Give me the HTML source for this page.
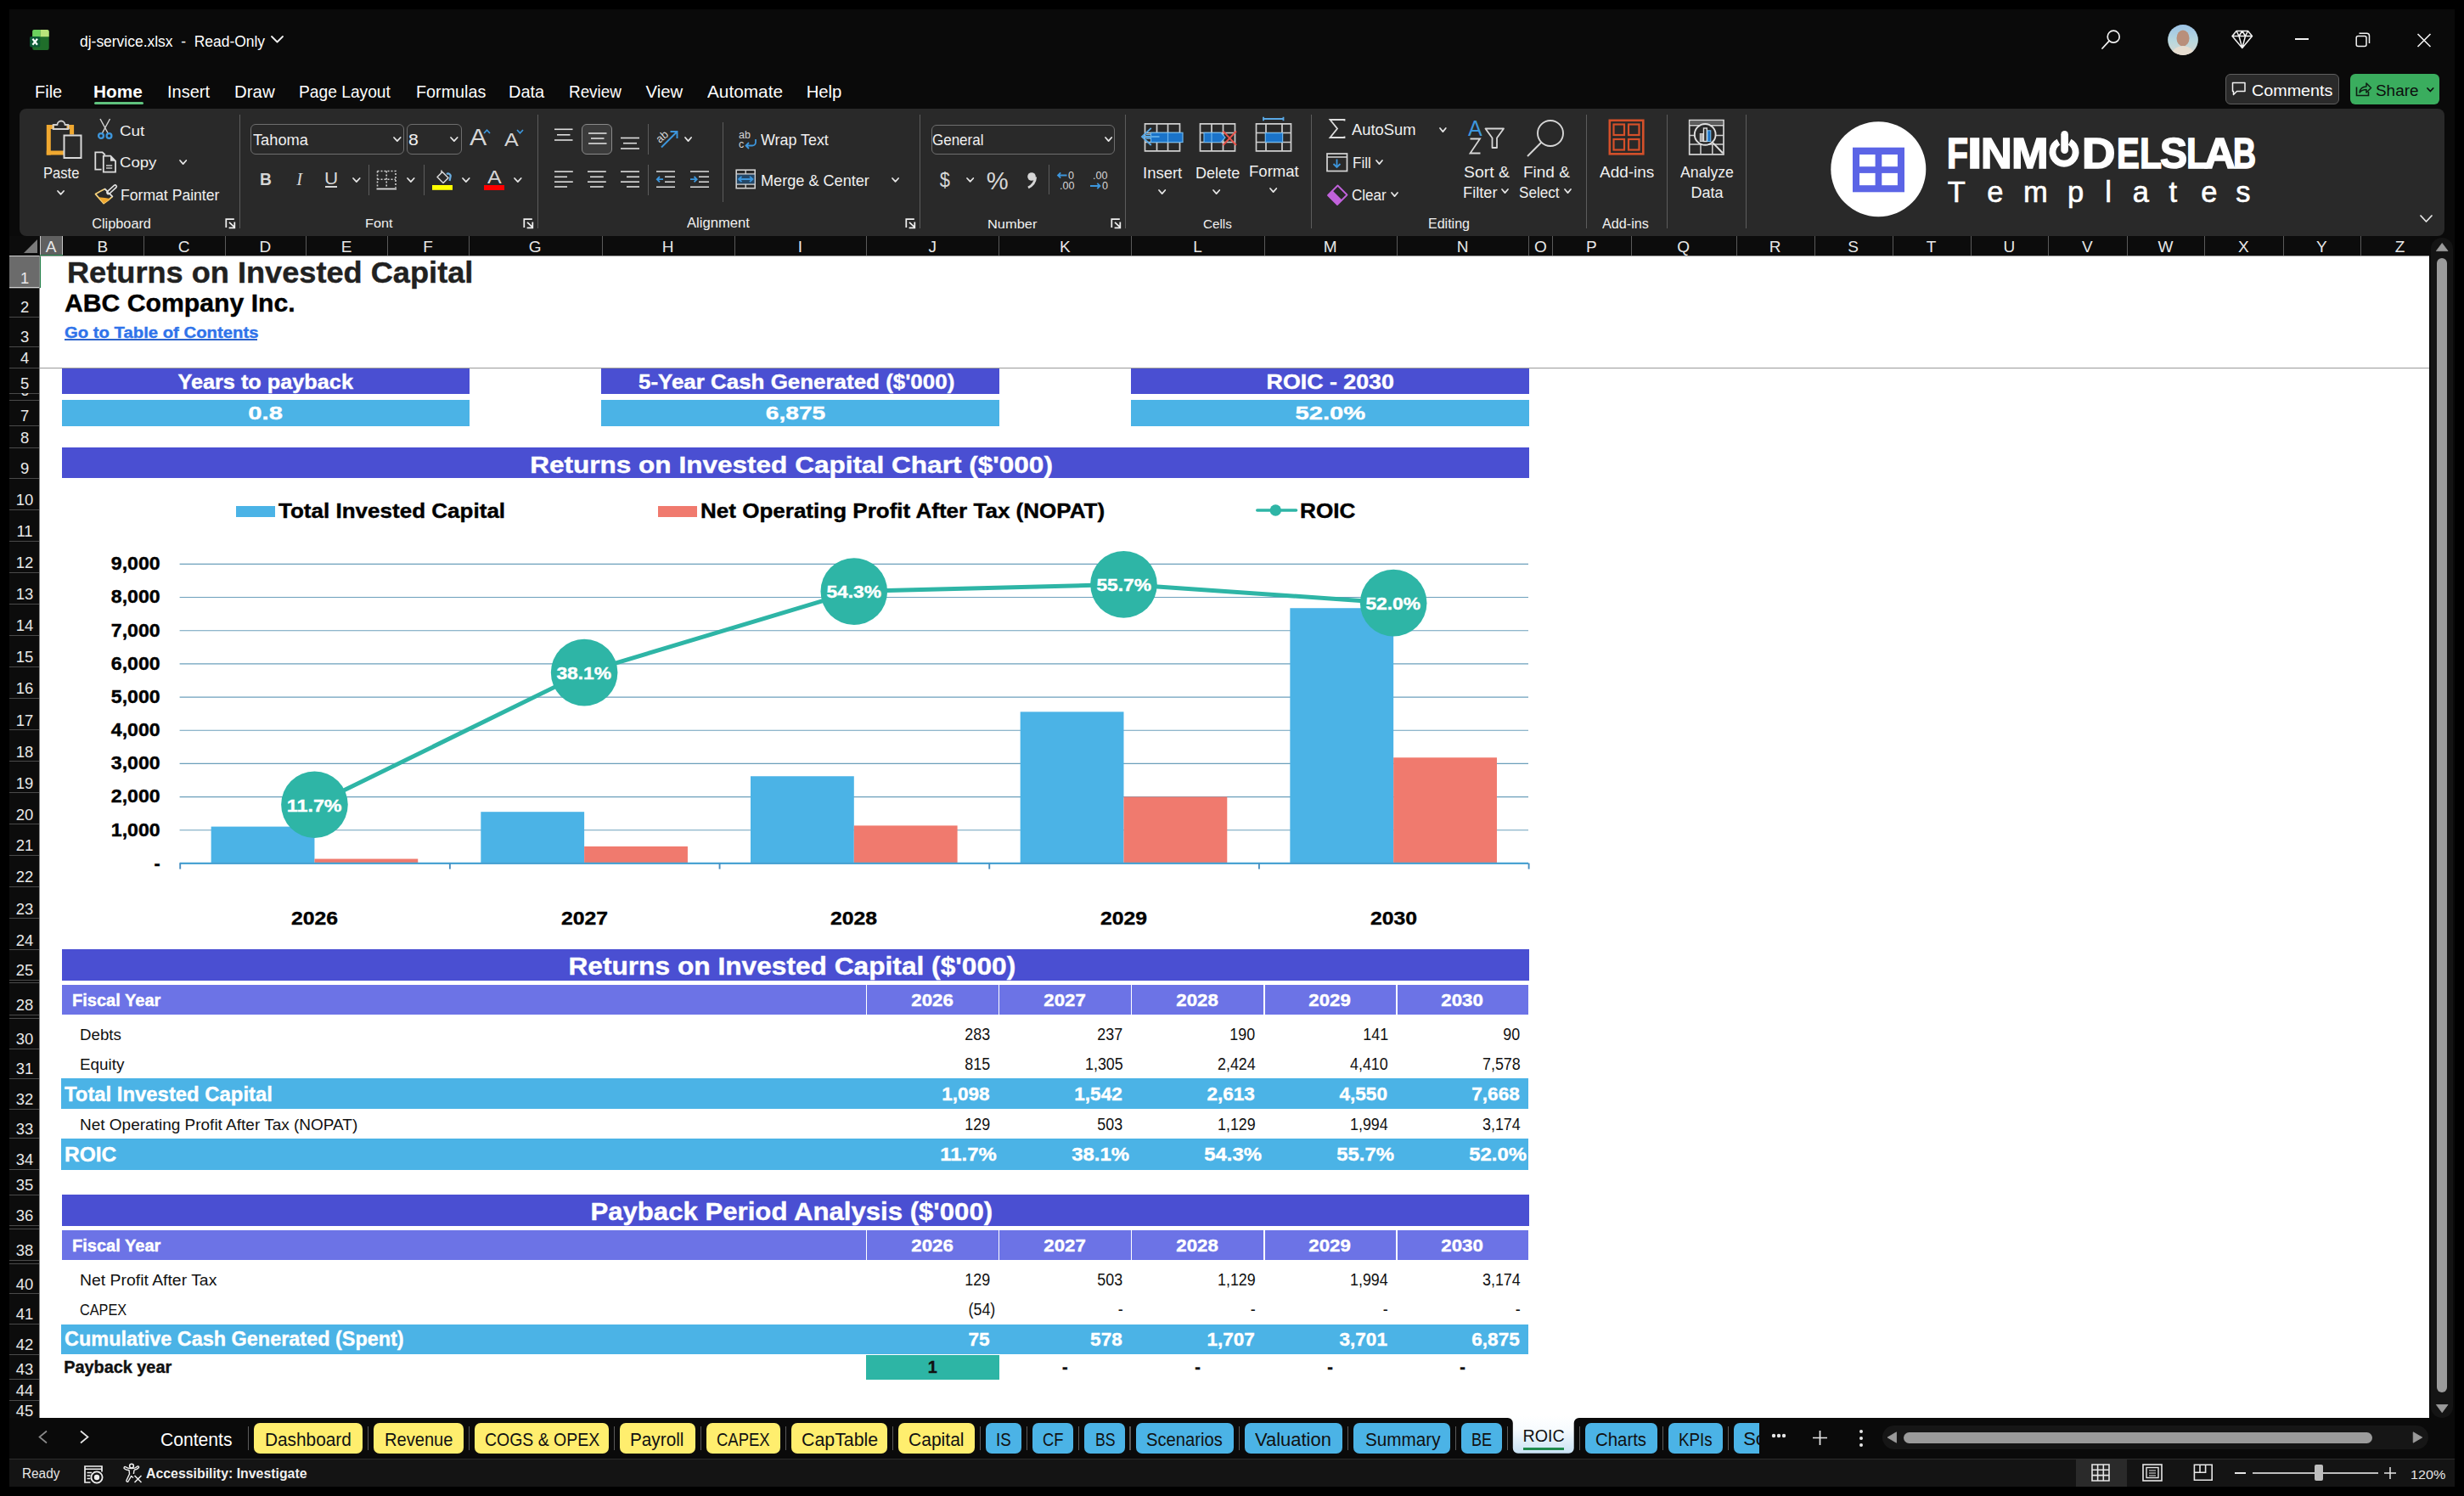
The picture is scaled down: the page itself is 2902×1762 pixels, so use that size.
<!DOCTYPE html>
<html><head><meta charset="utf-8"><title>dj-service.xlsx - ROIC</title>
<style>
html,body{margin:0;padding:0;}
body{width:2902px;height:1762px;overflow:hidden;background:#000;position:relative;font-family:"Liberation Sans", sans-serif;}
div{position:absolute;box-sizing:border-box;}
</style></head><body>
<div style="left:11.00px;top:11.00px;width:2880.00px;height:1740.00px;background:#0a0a0a;"></div>
<svg style="position:absolute;left:35.00px;top:34.00px;overflow:visible;" width="24" height="26" viewBox="0 0 24 26">
      <rect x="3.2" y="0.9" width="19.5" height="24" rx="2.2" fill="#1f6e2a"/>
      <path d="M3.2,9.2 V3.1 a2.2,2.2 0 0 1 2.2,-2.2 H12.6 V9.2 Z" fill="#6bd25e"/>
      <path d="M12.6,0.9 H20.5 a2.2,2.2 0 0 1 2.2,2.2 V9.2 H12.6 Z" fill="#b8e57a"/>
      <rect x="0.1" y="9" width="12.2" height="12.4" rx="1.6" fill="#0c5b35"/>
      <path d="M3.4,11.8 L9,18.8 M9,11.8 L3.4,18.8" stroke="#f4fff8" stroke-width="2.2"/></svg>
<div style="left:94.35px;top:39.71px;font-family:'Liberation Sans';font-size:18.29px;color:#fff;font-weight:400;line-height:1;white-space:nowrap;transform:scaleX(0.9541);transform-origin:0 0;">dj-service.xlsx&nbsp;&nbsp;-&nbsp;&nbsp;Read-Only</div>
<svg style="position:absolute;left:317.70px;top:41.35px;overflow:visible;" width="17" height="10.5" viewBox="0 0 17 10.5"><polyline points="2,2 8.50,8.50 15.00,2" fill="none" stroke="#f0f0f0" stroke-width="1.8" stroke-linecap="round" stroke-linejoin="round"/></svg>
<svg style="position:absolute;left:2474.00px;top:34.00px;overflow:visible;" width="26" height="26" viewBox="0 0 26 26"><circle cx="15.2" cy="9.2" r="7" fill="none" stroke="#f2f2f2" stroke-width="1.7"/><line x1="10.2" y1="14.2" x2="2" y2="23" stroke="#f2f2f2" stroke-width="1.8" stroke-linecap="round"/></svg>
<svg style="position:absolute;left:2553.00px;top:28.80px;overflow:visible;" width="36" height="36" viewBox="0 0 36 36"><defs><clipPath id="av"><circle cx="18" cy="18" r="17.9"/></clipPath><linearGradient id="sky" x1="0" y1="0" x2="0" y2="1"><stop offset="0" stop-color="#9cc3e6"/><stop offset="0.55" stop-color="#b9d8de"/><stop offset="1" stop-color="#d9d6cf"/></linearGradient></defs>
      <g clip-path="url(#av)"><rect width="36" height="36" fill="url(#sky)"/><ellipse cx="18" cy="16" rx="7.5" ry="9.5" fill="#b98f7b"/><path d="M4,36 Q6,26 18,25 Q30,26 32,36 Z" fill="#e6ddd0"/></g></svg>
<svg style="position:absolute;left:2628.00px;top:35.00px;overflow:visible;" width="26" height="23" viewBox="0 0 26 23"><path d="M6,1.5 H19.5 L24.5,7.5 L12.8,21.5 L1,7.5 Z M1,7.5 H24.5 M6,1.5 L9,7.5 L12.8,21.5 L16.5,7.5 L19.5,1.5 M9,7.5 L12.8,1.5 L16.5,7.5" fill="none" stroke="#f2f2f2" stroke-width="1.5" stroke-linejoin="round"/></svg>
<div style="left:2703.20px;top:45.00px;width:15.60px;height:1.50px;background:#f2f2f2;"></div>
<svg style="position:absolute;left:2774.00px;top:38.00px;overflow:visible;" width="18" height="18" viewBox="0 0 18 18"><rect x="1.2" y="4.5" width="11.8" height="12" rx="2" fill="none" stroke="#f2f2f2" stroke-width="1.5"/><path d="M4.5,1.2 H13.5 a3,3 0 0 1 3,3 V13" fill="none" stroke="#f2f2f2" stroke-width="1.5"/></svg>
<svg style="position:absolute;left:2846.00px;top:38.50px;overflow:visible;" width="18" height="17" viewBox="0 0 18 17"><path d="M1.5,1 L16.5,16 M16.5,1 L1.5,16" stroke="#f2f2f2" stroke-width="1.6"/></svg>
<div style="left:2621.00px;top:87.30px;width:134.40px;height:35.40px;background:#2a2a2a;border:1px solid #5e5e5e;border-radius:6px;"></div>
<svg style="position:absolute;left:2628.00px;top:96.00px;overflow:visible;" width="18" height="18" viewBox="0 0 18 18"><path d="M1.5,1.5 H16 V11.5 H6.5 L2.5,15.5 V11.5 H1.5 Z" fill="none" stroke="#f2f2f2" stroke-width="1.5" stroke-linejoin="round"/></svg>
<div style="left:2651.52px;top:97.91px;font-family:'Liberation Sans';font-size:18.29px;color:#fff;font-weight:400;line-height:1;white-space:nowrap;transform:scaleX(1.0789);transform-origin:0 0;">Comments</div>
<div style="left:2768.30px;top:87.30px;width:104.60px;height:35.40px;background:#3aad5e;border-radius:6px;"></div>
<svg style="position:absolute;left:2774.00px;top:96.00px;overflow:visible;" width="20" height="18" viewBox="0 0 20 18"><path d="M1.5,6.5 V16.5 H15.5 V12" fill="none" stroke="#0f1f14" stroke-width="1.6"/><path d="M5,13 Q6,6 13,6 V2 L18.5,7.5 L13,13 V9.5 Q8,9.5 5,13 Z" fill="none" stroke="#0f1f14" stroke-width="1.5" stroke-linejoin="round"/></svg>
<div style="left:2798.36px;top:97.91px;font-family:'Liberation Sans';font-size:18.29px;color:#0d0d0d;font-weight:400;line-height:1;white-space:nowrap;transform:scaleX(1.0343);transform-origin:0 0;">Share</div>
<svg style="position:absolute;left:2856.95px;top:101.95px;overflow:visible;" width="10.7" height="7.5" viewBox="0 0 10.7 7.5"><polyline points="2,2 5.35,5.50 8.70,2" fill="none" stroke="#0d0d0d" stroke-width="1.75" stroke-linecap="round" stroke-linejoin="round"/></svg>
<div style="left:41.00px;top:97.62px;font-family:'Liberation Sans';font-size:20.29px;color:#fff;font-weight:400;line-height:1;white-space:nowrap;transform:scaleX(0.9850);transform-origin:0 0;">File</div>
<div style="left:109.95px;top:97.62px;font-family:'Liberation Sans';font-size:20.29px;color:#fff;font-weight:700;line-height:1;white-space:nowrap;transform:scaleX(1.0237);transform-origin:0 0;">Home</div>
<div style="left:196.60px;top:97.62px;font-family:'Liberation Sans';font-size:20.29px;color:#fff;font-weight:400;line-height:1;white-space:nowrap;transform:scaleX(0.9876);transform-origin:0 0;">Insert</div>
<div style="left:275.77px;top:97.62px;font-family:'Liberation Sans';font-size:20.29px;color:#fff;font-weight:400;line-height:1;white-space:nowrap;transform:scaleX(1.0068);transform-origin:0 0;">Draw</div>
<div style="left:351.85px;top:97.62px;font-family:'Liberation Sans';font-size:20.29px;color:#fff;font-weight:400;line-height:1;white-space:nowrap;transform:scaleX(0.9473);transform-origin:0 0;">Page Layout</div>
<div style="left:489.81px;top:97.62px;font-family:'Liberation Sans';font-size:20.29px;color:#fff;font-weight:400;line-height:1;white-space:nowrap;transform:scaleX(0.9745);transform-origin:0 0;">Formulas</div>
<div style="left:599.40px;top:97.62px;font-family:'Liberation Sans';font-size:20.29px;color:#fff;font-weight:400;line-height:1;white-space:nowrap;transform:scaleX(0.9849);transform-origin:0 0;">Data</div>
<div style="left:669.77px;top:97.62px;font-family:'Liberation Sans';font-size:20.29px;color:#fff;font-weight:400;line-height:1;white-space:nowrap;transform:scaleX(0.9303);transform-origin:0 0;">Review</div>
<div style="left:760.59px;top:97.62px;font-family:'Liberation Sans';font-size:20.29px;color:#fff;font-weight:400;line-height:1;white-space:nowrap;transform-origin:0 0;">View</div>
<div style="left:832.75px;top:97.62px;font-family:'Liberation Sans';font-size:20.29px;color:#fff;font-weight:400;line-height:1;white-space:nowrap;transform:scaleX(1.0252);transform-origin:0 0;">Automate</div>
<div style="left:949.68px;top:97.62px;font-family:'Liberation Sans';font-size:20.29px;color:#fff;font-weight:400;line-height:1;white-space:nowrap;transform-origin:0 0;">Help</div>
<div style="left:111.20px;top:120.00px;width:57.60px;height:2.80px;background:#5fc27e;border-radius:2px;"></div>
<div style="left:23.00px;top:128.00px;width:2855.50px;height:149.50px;background:#292929;border-radius:8px;"></div>
<svg style="position:absolute;left:52.00px;top:138.00px;overflow:visible;" width="48" height="52" viewBox="0 0 48 52">
      <path d="M5.3,44.6 V11.6 H12 M26.5,11.6 H32.6 V20.5" fill="none" stroke="#f0a830" stroke-width="5"/>
      <path d="M2.8,42 H23" stroke="#f0a830" stroke-width="5"/>
      <path d="M10.5,14 V9 H15.5 a4.5,4.5 0 0 1 9,0 H28.5 V14 Z" fill="none" stroke="#cfcfcf" stroke-width="1.8" stroke-linejoin="round"/>
      <rect x="23.5" y="21.5" width="20" height="26.5" fill="#292929" stroke="#d8d8d8" stroke-width="2"/></svg>
<div style="left:50.70px;top:195.60px;font-family:'Liberation Sans';font-size:17.71px;color:#f0f0f0;font-weight:400;line-height:1;white-space:nowrap;transform:scaleX(0.9372);transform-origin:0 0;">Paste</div>
<svg style="position:absolute;left:65.75px;top:222.65px;overflow:visible;" width="11.100000000000001" height="7.9" viewBox="0 0 11.100000000000001 7.9"><polyline points="2,2 5.55,5.90 9.10,2" fill="none" stroke="#e6e6e6" stroke-width="1.75" stroke-linecap="round" stroke-linejoin="round"/></svg>
<svg style="position:absolute;left:114.00px;top:139.00px;overflow:visible;" width="20" height="26" viewBox="0 0 20 26"><path d="M4,1 L13.5,18.5 M15.5,1 L6,18.5" stroke="#d0d0d0" stroke-width="1.5"/>
      <circle cx="5" cy="21" r="2.9" fill="none" stroke="#3d96dc" stroke-width="2.3"/><circle cx="14.5" cy="21" r="2.9" fill="none" stroke="#3d96dc" stroke-width="2.3"/></svg>
<div style="left:141.07px;top:145.91px;font-family:'Liberation Sans';font-size:16.29px;color:#f0f0f0;font-weight:400;line-height:1;white-space:nowrap;transform:scaleX(1.1587);transform-origin:0 0;">Cut</div>
<svg style="position:absolute;left:111.00px;top:178.00px;overflow:visible;" width="27" height="27" viewBox="0 0 27 27"><path d="M8.6,21.6 H1.3 V1.3 H9.6 L12.8,4.5" fill="none" stroke="#dcdcdc" stroke-width="1.8" stroke-linejoin="miter"/>
      <path d="M10.8,24.6 V5.7 H19.2 L25,11.5 V24.6 Z" fill="#292929" stroke="#dcdcdc" stroke-width="1.8" stroke-linejoin="miter"/>
      <path d="M19,5.7 V11.7 H25 Z" fill="#dcdcdc"/>
      <path d="M14,17 H21.2 M14,20 H21.2" stroke="#c4c4c4" stroke-width="1.6"/></svg>
<div style="left:141.08px;top:184.17px;font-family:'Liberation Sans';font-size:16.57px;color:#f0f0f0;font-weight:400;line-height:1;white-space:nowrap;transform:scaleX(1.1231);transform-origin:0 0;">Copy</div>
<svg style="position:absolute;left:209.75px;top:187.35px;overflow:visible;" width="11.3" height="8.1" viewBox="0 0 11.3 8.1"><polyline points="2,2 5.65,6.10 9.30,2" fill="none" stroke="#e6e6e6" stroke-width="1.75" stroke-linecap="round" stroke-linejoin="round"/></svg>
<svg style="position:absolute;left:111.00px;top:217.00px;overflow:visible;" width="28" height="26" viewBox="0 0 28 26"><path d="M12.6,5.6 Q7.5,8 1.5,11.6 L11.2,22.6 Q17.8,18.2 21.4,14.4" fill="#292929" stroke="#f6d27a" stroke-width="1.7" stroke-linejoin="round"/>
      <path d="M5.2,15.2 Q12.5,16 19,16.9 Q15.5,19.8 11.2,22.4 Z" fill="#f0a830"/>
      <path d="M12.2,5.2 L21.8,14.8" stroke="#e2e2e2" stroke-width="1.8"/>
      <line x1="16.6" y1="9.9" x2="24.6" y2="2.6" stroke="#e2e2e2" stroke-width="5" stroke-linecap="round"/>
      <line x1="17.6" y1="9" x2="24.6" y2="2.6" stroke="#292929" stroke-width="1.7" stroke-linecap="round"/></svg>
<div style="left:141.64px;top:222.08px;font-family:'Liberation Sans';font-size:17.86px;color:#f0f0f0;font-weight:400;line-height:1;white-space:nowrap;transform:scaleX(0.9856);transform-origin:0 0;">Format Painter</div>
<div style="left:108.22px;top:254.81px;font-family:'Liberation Sans';font-size:16.29px;color:#f0f0f0;font-weight:400;line-height:1;white-space:nowrap;transform-origin:0 0;">Clipboard</div>
<svg style="position:absolute;left:264.70px;top:257.00px;overflow:visible;" width="13" height="13" viewBox="0 0 13 13"><path d="M1.3,11 V1.2 H10.8" fill="none" stroke="#f0f0f0" stroke-width="1.75"/><path d="M5,4.8 L11,10.4 M11.3,4.6 V11.3 H4.6" fill="none" stroke="#f0f0f0" stroke-width="1.75"/></svg>
<div style="left:282.00px;top:135.00px;width:1.00px;height:134.00px;background:#5c5c5c;"></div>
<div style="left:295.10px;top:146.00px;width:180.80px;height:35.60px;border:1.2px solid #6e6e6e;border-radius:6px;"></div>
<div style="left:297.61px;top:156.46px;font-family:'Liberation Sans';font-size:18.0px;color:#f0f0f0;font-weight:400;line-height:1;white-space:nowrap;transform:scaleX(1.0131);transform-origin:0 0;">Tahoma</div>
<svg style="position:absolute;left:461.65px;top:160.35px;overflow:visible;" width="11.7" height="8.1" viewBox="0 0 11.7 8.1"><polyline points="2,2 5.85,6.10 9.70,2" fill="none" stroke="#e6e6e6" stroke-width="1.75" stroke-linecap="round" stroke-linejoin="round"/></svg>
<div style="left:479.20px;top:146.00px;width:64.40px;height:35.60px;border:1.2px solid #6e6e6e;border-radius:6px;"></div>
<div style="left:481.12px;top:156.46px;font-family:'Liberation Sans';font-size:18.0px;color:#f0f0f0;font-weight:400;line-height:1;white-space:nowrap;transform:scaleX(1.1839);transform-origin:0 0;">8</div>
<svg style="position:absolute;left:529.25px;top:160.35px;overflow:visible;" width="11.7" height="8.1" viewBox="0 0 11.7 8.1"><polyline points="2,2 5.85,6.10 9.70,2" fill="none" stroke="#e6e6e6" stroke-width="1.75" stroke-linecap="round" stroke-linejoin="round"/></svg>
<div style="left:552.58px;top:149.38px;font-family:'Liberation Sans';font-size:26.71px;color:#d6d6d6;font-weight:400;line-height:1;white-space:nowrap;transform:scaleX(1.1364);transform-origin:0 0;">A</div>
<svg style="position:absolute;left:569.00px;top:152.00px;overflow:visible;" width="9" height="6" viewBox="0 0 9 6"><polyline points="1,5 4.5,1.2 8,5" fill="none" stroke="#3d96dc" stroke-width="1.7"/></svg>
<div style="left:594.00px;top:153.62px;font-family:'Liberation Sans';font-size:21.71px;color:#d6d6d6;font-weight:400;line-height:1;white-space:nowrap;transform:scaleX(1.1533);transform-origin:0 0;">A</div>
<svg style="position:absolute;left:608.00px;top:152.00px;overflow:visible;" width="9" height="6" viewBox="0 0 9 6"><polyline points="1,1 4.5,4.8 8,1" fill="none" stroke="#3d96dc" stroke-width="1.7"/></svg>
<div style="left:306.14px;top:200.68px;font-family:'Liberation Sans';font-size:20.57px;color:#d6d6d6;font-weight:700;line-height:1;white-space:nowrap;transform:scaleX(0.9362);transform-origin:0 0;">B</div>
<div style="left:349.14px;top:200.68px;font-family:'Liberation Sans';font-size:20.57px;color:#d6d6d6;font-weight:400;line-height:1;white-space:nowrap;transform-origin:50% 0;font-style:italic;font-family:Liberation Serif;">I</div>
<div style="left:382.15px;top:201.11px;font-family:'Liberation Sans';font-size:19.71px;color:#d6d6d6;font-weight:400;line-height:1;white-space:nowrap;transform:scaleX(1.1389);transform-origin:0 0;">U</div>
<div style="left:383.00px;top:219.20px;width:14.40px;height:1.80px;background:#d6d6d6;"></div>
<svg style="position:absolute;left:413.55px;top:207.85px;overflow:visible;" width="11.7" height="8.1" viewBox="0 0 11.7 8.1"><polyline points="2,2 5.85,6.10 9.70,2" fill="none" stroke="#e6e6e6" stroke-width="1.75" stroke-linecap="round" stroke-linejoin="round"/></svg>
<div style="left:434.00px;top:193.60px;width:1.00px;height:36.00px;background:#5c5c5c;"></div>
<svg style="position:absolute;left:443.00px;top:199.50px;overflow:visible;" width="25" height="24" viewBox="0 0 25 24"><path d="M1.5,1.5 H23 V21 M1.5,1.5 V21 M12.2,1.5 V21 M1.5,11.2 H23" fill="none" stroke="#cfcfcf" stroke-width="1.6" stroke-dasharray="2,2"/><path d="M0.5,22.5 H24" stroke="#e0e0e0" stroke-width="1.8"/></svg>
<svg style="position:absolute;left:478.35px;top:207.85px;overflow:visible;" width="11.7" height="8.1" viewBox="0 0 11.7 8.1"><polyline points="2,2 5.85,6.10 9.70,2" fill="none" stroke="#e6e6e6" stroke-width="1.75" stroke-linecap="round" stroke-linejoin="round"/></svg>
<div style="left:499.20px;top:193.60px;width:1.00px;height:36.00px;background:#5c5c5c;"></div>
<svg style="position:absolute;left:510.00px;top:199.00px;overflow:visible;" width="24" height="26" viewBox="0 0 24 26"><path d="M5,9.5 L11,3.5 L18,10.5 L12,16.5 Z" fill="none" stroke="#d6d6d6" stroke-width="1.6" stroke-linejoin="round"/>
      <path d="M10,4.5 V1.5" stroke="#d6d6d6" stroke-width="1.6"/><path d="M16,6 a3,3 0 0 1 4.5,3.5 L19.5,14" fill="none" stroke="#6aaee0" stroke-width="2.2"/>
      <rect x="-1" y="19" width="24" height="5.8" fill="#ffff00"/></svg>
<svg style="position:absolute;left:543.15px;top:207.85px;overflow:visible;" width="11.7" height="8.1" viewBox="0 0 11.7 8.1"><polyline points="2,2 5.85,6.10 9.70,2" fill="none" stroke="#e6e6e6" stroke-width="1.75" stroke-linecap="round" stroke-linejoin="round"/></svg>
<div style="left:573.80px;top:198.29px;font-family:'Liberation Sans';font-size:22.57px;color:#d6d6d6;font-weight:400;line-height:1;white-space:nowrap;transform:scaleX(1.1089);transform-origin:0 0;">A</div>
<div style="left:569.80px;top:218.00px;width:24.20px;height:5.80px;background:#ff0000;"></div>
<svg style="position:absolute;left:604.45px;top:207.85px;overflow:visible;" width="11.7" height="8.1" viewBox="0 0 11.7 8.1"><polyline points="2,2 5.85,6.10 9.70,2" fill="none" stroke="#e6e6e6" stroke-width="1.75" stroke-linecap="round" stroke-linejoin="round"/></svg>
<div style="left:429.53px;top:256.38px;font-family:'Liberation Sans';font-size:14.43px;color:#f0f0f0;font-weight:400;line-height:1;white-space:nowrap;transform:scaleX(1.1243);transform-origin:0 0;">Font</div>
<svg style="position:absolute;left:615.60px;top:257.00px;overflow:visible;" width="13" height="13" viewBox="0 0 13 13"><path d="M1.3,11 V1.2 H10.8" fill="none" stroke="#f0f0f0" stroke-width="1.75"/><path d="M5,4.8 L11,10.4 M11.3,4.6 V11.3 H4.6" fill="none" stroke="#f0f0f0" stroke-width="1.75"/></svg>
<div style="left:632.90px;top:135.00px;width:1.00px;height:134.00px;background:#5c5c5c;"></div>
<svg style="position:absolute;left:653.30px;top:140.00px;overflow:visible;" width="40" height="90" viewBox="0 0 40 90"><line x1="0" y1="12.3" x2="21.5" y2="12.3" stroke="#dedede" stroke-width="1.6"/><line x1="3" y1="18.8" x2="18.5" y2="18.8" stroke="#dedede" stroke-width="1.6"/><line x1="0" y1="25" x2="21.5" y2="25" stroke="#dedede" stroke-width="1.6"/></svg>
<div style="left:685.40px;top:146.30px;width:35.50px;height:35.50px;background:#3b3b3b;border:1.2px solid #8a8a8a;border-radius:6px;"></div>
<svg style="position:absolute;left:692.50px;top:140.00px;overflow:visible;" width="40" height="90" viewBox="0 0 40 90"><line x1="0" y1="17" x2="21.5" y2="17" stroke="#dedede" stroke-width="1.6"/><line x1="3" y1="23" x2="18.5" y2="23" stroke="#dedede" stroke-width="1.6"/><line x1="0" y1="29" x2="21.5" y2="29" stroke="#dedede" stroke-width="1.6"/></svg>
<svg style="position:absolute;left:730.80px;top:140.00px;overflow:visible;" width="40" height="90" viewBox="0 0 40 90"><line x1="0" y1="22.5" x2="22" y2="22.5" stroke="#dedede" stroke-width="1.6"/><line x1="3" y1="28.7" x2="19" y2="28.7" stroke="#dedede" stroke-width="1.6"/><line x1="0" y1="35" x2="22" y2="35" stroke="#dedede" stroke-width="1.6"/></svg>
<div style="left:763.00px;top:145.70px;width:1.00px;height:36.30px;background:#5c5c5c;"></div>
<svg style="position:absolute;left:772.00px;top:150.00px;overflow:visible;" width="28" height="26" viewBox="0 0 28 26"><text x="0" y="0" transform="translate(5,19) rotate(-40)" font-family="Liberation Sans" font-size="13" fill="#d6d6d6">ab</text>
      <path d="M7,23.5 L25,5.5 M17.5,5 H25.5 V13" fill="none" stroke="#3d96dc" stroke-width="1.9"/></svg>
<svg style="position:absolute;left:804.65px;top:160.35px;overflow:visible;" width="11.100000000000001" height="8.1" viewBox="0 0 11.100000000000001 8.1"><polyline points="2,2 5.55,6.10 9.10,2" fill="none" stroke="#e6e6e6" stroke-width="1.75" stroke-linecap="round" stroke-linejoin="round"/></svg>
<div style="left:851.10px;top:144.00px;width:1.00px;height:94.00px;background:#5c5c5c;"></div>
<svg style="position:absolute;left:870.00px;top:152.00px;overflow:visible;" width="23" height="25" viewBox="0 0 23 25"><text x="0" y="10.5" font-family="Liberation Sans" font-size="12.5" fill="#d6d6d6">ab</text><text x="0" y="22" font-family="Liberation Sans" font-size="12.5" fill="#d6d6d6">c</text>
      <path d="M20,12 V15.5 a4,4 0 0 1 -4,4 H9 M12,16 L8.5,19.5 L12,23" fill="none" stroke="#3d96dc" stroke-width="1.8"/></svg>
<div style="left:896.23px;top:157.04px;font-family:'Liberation Sans';font-size:17.43px;color:#f0f0f0;font-weight:400;line-height:1;white-space:nowrap;transform:scaleX(1.0263);transform-origin:0 0;">Wrap Text</div>
<svg style="position:absolute;left:653.00px;top:140.00px;overflow:visible;" width="40" height="90" viewBox="0 0 40 90"><line x1="0" y1="62.1" x2="21.8" y2="62.1" stroke="#dedede" stroke-width="1.6"/><line x1="0" y1="68.3" x2="15" y2="68.3" stroke="#dedede" stroke-width="1.6"/><line x1="0" y1="74.2" x2="21.8" y2="74.2" stroke="#dedede" stroke-width="1.6"/><line x1="0" y1="80" x2="15" y2="80" stroke="#dedede" stroke-width="1.6"/></svg>
<svg style="position:absolute;left:692.00px;top:140.00px;overflow:visible;" width="40" height="90" viewBox="0 0 40 90"><line x1="0" y1="62.1" x2="21.8" y2="62.1" stroke="#dedede" stroke-width="1.6"/><line x1="3" y1="68.3" x2="18.8" y2="68.3" stroke="#dedede" stroke-width="1.6"/><line x1="0" y1="74.2" x2="21.8" y2="74.2" stroke="#dedede" stroke-width="1.6"/><line x1="3" y1="80" x2="18.8" y2="80" stroke="#dedede" stroke-width="1.6"/></svg>
<svg style="position:absolute;left:730.80px;top:140.00px;overflow:visible;" width="40" height="90" viewBox="0 0 40 90"><line x1="0" y1="62.1" x2="22" y2="62.1" stroke="#dedede" stroke-width="1.6"/><line x1="7" y1="68.3" x2="22" y2="68.3" stroke="#dedede" stroke-width="1.6"/><line x1="0" y1="74.2" x2="22" y2="74.2" stroke="#dedede" stroke-width="1.6"/><line x1="7" y1="80" x2="22" y2="80" stroke="#dedede" stroke-width="1.6"/></svg>
<div style="left:763.00px;top:194.30px;width:1.00px;height:35.40px;background:#5c5c5c;"></div>
<svg style="position:absolute;left:773.00px;top:198.00px;overflow:visible;" width="25" height="25" viewBox="0 0 25 25"><path d="M0,4 H22 M10,10.2 H22 M10,16.3 H22 M0,22.2 H22" stroke="#dedede" stroke-width="1.6"/><path d="M8,13.2 H0.8 M4,10 L0.8,13.2 L4,16.4" fill="none" stroke="#3d96dc" stroke-width="1.8"/></svg>
<svg style="position:absolute;left:812.50px;top:198.00px;overflow:visible;" width="25" height="25" viewBox="0 0 25 25"><path d="M0,4 H22 M10,10.2 H22 M10,16.3 H22 M0,22.2 H22" stroke="#dedede" stroke-width="1.6"/><path d="M0,13.2 H7.5 M4.5,10 L7.7,13.2 L4.5,16.4" fill="none" stroke="#3d96dc" stroke-width="1.8"/></svg>
<svg style="position:absolute;left:866.00px;top:199.00px;overflow:visible;" width="25" height="24" viewBox="0 0 25 24"><rect x="1.2" y="1.2" width="22" height="21.5" fill="none" stroke="#d0d0d0" stroke-width="1.6"/>
      <path d="M1.2,6 H23.2 M1.2,18 H23.2 M12.2,1.2 V6 M12.2,18 V22.7" stroke="#d0d0d0" stroke-width="1.4"/>
      <rect x="1.8" y="6.5" width="21" height="11" fill="#1f5e99" opacity="0.55"/>
      <path d="M4,12 H20.5 M7.5,8.8 L4,12 L7.5,15.2 M17,8.8 L20.5,12 L17,15.2" fill="none" stroke="#3d96dc" stroke-width="1.8"/></svg>
<div style="left:896.21px;top:204.58px;font-family:'Liberation Sans';font-size:17.86px;color:#f0f0f0;font-weight:400;line-height:1;white-space:nowrap;transform:scaleX(1.0144);transform-origin:0 0;">Merge &amp; Center</div>
<svg style="position:absolute;left:1048.65px;top:208.45px;overflow:visible;" width="11.100000000000001" height="7.9" viewBox="0 0 11.100000000000001 7.9"><polyline points="2,2 5.55,5.90 9.10,2" fill="none" stroke="#e6e6e6" stroke-width="1.75" stroke-linecap="round" stroke-linejoin="round"/></svg>
<div style="left:809.20px;top:255.25px;font-family:'Liberation Sans';font-size:16.0px;color:#f0f0f0;font-weight:400;line-height:1;white-space:nowrap;transform:scaleX(1.0370);transform-origin:0 0;">Alignment</div>
<svg style="position:absolute;left:1065.90px;top:256.80px;overflow:visible;" width="13" height="13" viewBox="0 0 13 13"><path d="M1.3,11 V1.2 H10.8" fill="none" stroke="#f0f0f0" stroke-width="1.75"/><path d="M5,4.8 L11,10.4 M11.3,4.6 V11.3 H4.6" fill="none" stroke="#f0f0f0" stroke-width="1.75"/></svg>
<div style="left:1082.90px;top:135.00px;width:1.00px;height:134.00px;background:#5c5c5c;"></div>
<div style="left:1096.60px;top:146.50px;width:216.80px;height:35.10px;border:1.2px solid #6e6e6e;border-radius:6px;"></div>
<div style="left:1098.48px;top:156.34px;font-family:'Liberation Sans';font-size:18.14px;color:#f0f0f0;font-weight:400;line-height:1;white-space:nowrap;transform:scaleX(0.9373);transform-origin:0 0;">General</div>
<svg style="position:absolute;left:1299.60px;top:160.45px;overflow:visible;" width="11.2" height="8.1" viewBox="0 0 11.2 8.1"><polyline points="2,2 5.60,6.10 9.20,2" fill="none" stroke="#e6e6e6" stroke-width="1.75" stroke-linecap="round" stroke-linejoin="round"/></svg>
<div style="left:1106.34px;top:200.23px;font-family:'Liberation Sans';font-size:24.29px;color:#d6d6d6;font-weight:400;line-height:1;white-space:nowrap;transform:scaleX(0.9000);transform-origin:50% 0;">$</div>
<svg style="position:absolute;left:1136.65px;top:208.25px;overflow:visible;" width="11.3" height="7.9" viewBox="0 0 11.3 7.9"><polyline points="2,2 5.65,5.90 9.30,2" fill="none" stroke="#e6e6e6" stroke-width="1.75" stroke-linecap="round" stroke-linejoin="round"/></svg>
<div style="left:1162.30px;top:199.11px;font-family:'Liberation Sans';font-size:28.57px;color:#d6d6d6;font-weight:400;line-height:1;white-space:nowrap;transform:scaleX(1.0192);transform-origin:50% 0;">%</div>
<svg style="position:absolute;left:1208.00px;top:203.00px;overflow:visible;" width="14" height="19" viewBox="0 0 14 19"><circle cx="7" cy="5" r="4.8" fill="#d6d6d6"/><path d="M11.6,5.5 Q11,14 3,18" fill="none" stroke="#d6d6d6" stroke-width="3"/></svg>
<div style="left:1235.00px;top:194.00px;width:1.00px;height:35.30px;background:#5c5c5c;"></div>
<svg style="position:absolute;left:1244.00px;top:199.00px;overflow:visible;" width="26" height="26" viewBox="0 0 26 26"><text x="14" y="11.5" font-family="Liberation Sans" font-size="12.5" fill="#d6d6d6">0</text><text x="4" y="24" font-family="Liberation Sans" font-size="12.5" fill="#d6d6d6">.00</text>
      <path d="M12.5,7.5 H2 M5.2,4.3 L2,7.5 L5.2,10.7" fill="none" stroke="#3d96dc" stroke-width="1.8"/></svg>
<svg style="position:absolute;left:1283.00px;top:199.00px;overflow:visible;" width="26" height="26" viewBox="0 0 26 26"><text x="4" y="11.5" font-family="Liberation Sans" font-size="12.5" fill="#d6d6d6">.00</text><text x="15" y="24" font-family="Liberation Sans" font-size="12.5" fill="#d6d6d6">0</text>
      <path d="M1,20 H12.5 M9.3,16.8 L12.5,20 L9.3,23.2" fill="none" stroke="#3d96dc" stroke-width="1.8"/></svg>
<div style="left:1162.81px;top:255.88px;font-family:'Liberation Sans';font-size:15.14px;color:#f0f0f0;font-weight:400;line-height:1;white-space:nowrap;transform:scaleX(1.0870);transform-origin:0 0;">Number</div>
<svg style="position:absolute;left:1308.00px;top:257.00px;overflow:visible;" width="13" height="13" viewBox="0 0 13 13"><path d="M1.3,11 V1.2 H10.8" fill="none" stroke="#f0f0f0" stroke-width="1.75"/><path d="M5,4.8 L11,10.4 M11.3,4.6 V11.3 H4.6" fill="none" stroke="#f0f0f0" stroke-width="1.75"/></svg>
<div style="left:1325.30px;top:135.00px;width:1.00px;height:134.00px;background:#5c5c5c;"></div>
<svg style="position:absolute;left:1343.00px;top:144.00px;overflow:visible;" width="52" height="36" viewBox="0 0 52 36"><path d="M5.5,1.8 H46.5 V33.8 H5.5 Z M5.5,12.5 H46.5 M5.5,23.5 H46.5 M19.5,1.8 V33.8 M32.5,1.8 V33.8" fill="none" stroke="#cfcfcf" stroke-width="1.7"/><rect x="12.5" y="12.3" width="37.5" height="11.2" fill="#1a73c9" stroke="#6cb6ee" stroke-width="1.2"/><path d="M32.5,12.5 V23.5" stroke="#6cb6ee" stroke-width="1.2"/><path d="M13,14.5 H7 M13,19 H7" stroke="#6cb6ee" stroke-width="1.3"/><path d="M22.5,17 H2.5 M12.8,6.9 L2,17 L12.8,27" fill="none" stroke="#5aa9e6" stroke-width="1.9"/></svg>
<div style="left:1346.19px;top:195.36px;font-family:'Liberation Sans';font-size:18.0px;color:#f0f0f0;font-weight:400;line-height:1;white-space:nowrap;transform:scaleX(1.0263);transform-origin:0 0;">Insert</div>
<svg style="position:absolute;left:1362.65px;top:222.45px;overflow:visible;" width="11.3" height="8.1" viewBox="0 0 11.3 8.1"><polyline points="2,2 5.65,6.10 9.30,2" fill="none" stroke="#e6e6e6" stroke-width="1.75" stroke-linecap="round" stroke-linejoin="round"/></svg>
<svg style="position:absolute;left:1412.00px;top:144.00px;overflow:visible;" width="48" height="36" viewBox="0 0 48 36"><path d="M1.5,1.8 H42.5 V33.8 H1.5 Z M1.5,12.5 H42.5 M1.5,23.5 H42.5 M15,1.8 V33.8 M28.5,1.8 V33.8" fill="none" stroke="#cfcfcf" stroke-width="1.7"/><path d="M6,12.3 H26 L31,17.9 L26,23.5 H6 Z" fill="#1a73c9" stroke="#6cb6ee" stroke-width="1.2"/><path d="M15,12.5 V23.5" stroke="#6cb6ee" stroke-width="1.2"/><path d="M28.5,10.5 L44,27 M44,10.5 L28.5,27" stroke="#e8534a" stroke-width="1.9"/></svg>
<div style="left:1408.12px;top:195.36px;font-family:'Liberation Sans';font-size:18.0px;color:#f0f0f0;font-weight:400;line-height:1;white-space:nowrap;transform-origin:0 0;">Delete</div>
<svg style="position:absolute;left:1427.45px;top:222.45px;overflow:visible;" width="11.3" height="8.1" viewBox="0 0 11.3 8.1"><polyline points="2,2 5.65,6.10 9.30,2" fill="none" stroke="#e6e6e6" stroke-width="1.75" stroke-linecap="round" stroke-linejoin="round"/></svg>
<svg style="position:absolute;left:1478.00px;top:136.00px;overflow:visible;" width="45" height="44" viewBox="0 0 45 44"><path d="M10,4 H33.5 M10,1.8 V6.2 M33.5,1.8 V6.2" stroke="#5aa9e6" stroke-width="1.8"/><path d="M1.5,9.8 H42.5 V41.8 H1.5 Z M1.5,20.5 H42.5 M1.5,31.5 H42.5 M13,9.8 V41.8 M32,9.8 V41.8" fill="none" stroke="#cfcfcf" stroke-width="1.7"/><rect x="12.3" y="20.6" width="20.3" height="10.8" fill="#1a73c9" stroke="#6cb6ee" stroke-width="1.2"/></svg>
<div style="left:1471.39px;top:193.34px;font-family:'Liberation Sans';font-size:18.14px;color:#f0f0f0;font-weight:400;line-height:1;white-space:nowrap;transform:scaleX(1.0230);transform-origin:0 0;">Format</div>
<svg style="position:absolute;left:1493.75px;top:220.45px;overflow:visible;" width="11.3" height="8.1" viewBox="0 0 11.3 8.1"><polyline points="2,2 5.65,6.10 9.30,2" fill="none" stroke="#e6e6e6" stroke-width="1.75" stroke-linecap="round" stroke-linejoin="round"/></svg>
<div style="left:1417.09px;top:256.04px;font-family:'Liberation Sans';font-size:15.43px;color:#f0f0f0;font-weight:400;line-height:1;white-space:nowrap;transform:scaleX(0.9868);transform-origin:0 0;">Cells</div>
<div style="left:1544.00px;top:135.00px;width:1.00px;height:134.00px;background:#5c5c5c;"></div>
<svg style="position:absolute;left:1565.00px;top:140.00px;overflow:visible;" width="20" height="24" viewBox="0 0 20 24"><path d="M18.5,2.5 V1 H1.5 L10,11.5 L1.5,22 H18.5 V20.5" fill="none" stroke="#dedede" stroke-width="1.8" stroke-linejoin="miter"/></svg>
<div style="left:1592.20px;top:144.06px;font-family:'Liberation Sans';font-size:18.71px;color:#f0f0f0;font-weight:400;line-height:1;white-space:nowrap;transform:scaleX(0.9835);transform-origin:0 0;">AutoSum</div>
<svg style="position:absolute;left:1693.90px;top:148.65px;overflow:visible;" width="10.8" height="8.1" viewBox="0 0 10.8 8.1"><polyline points="2,2 5.40,6.10 8.80,2" fill="none" stroke="#e6e6e6" stroke-width="1.75" stroke-linecap="round" stroke-linejoin="round"/></svg>
<svg style="position:absolute;left:1562.00px;top:180.00px;overflow:visible;" width="26" height="22" viewBox="0 0 26 22"><rect x="1" y="1" width="23.5" height="20.5" fill="none" stroke="#d6d6d6" stroke-width="1.7"/><path d="M1,5 H24.5" stroke="#d6d6d6" stroke-width="1.5"/><path d="M12.5,7.5 V17 M8.5,13 L12.5,17 L16.5,13" fill="none" stroke="#3d96dc" stroke-width="1.8"/></svg>
<div style="left:1592.68px;top:182.53px;font-family:'Liberation Sans';font-size:18.86px;color:#f0f0f0;font-weight:400;line-height:1;white-space:nowrap;transform:scaleX(0.9024);transform-origin:0 0;">Fill</div>
<svg style="position:absolute;left:1618.70px;top:186.95px;overflow:visible;" width="11.0" height="8.1" viewBox="0 0 11.0 8.1"><polyline points="2,2 5.50,6.10 9.00,2" fill="none" stroke="#e6e6e6" stroke-width="1.75" stroke-linecap="round" stroke-linejoin="round"/></svg>
<svg style="position:absolute;left:1562.00px;top:217.00px;overflow:visible;" width="26" height="26" viewBox="0 0 26 26"><path d="M13.5,1.5 L24.5,12.5 L13,24 L2,13 Z" fill="none" stroke="#c162db" stroke-width="1.8" stroke-linejoin="round"/><path d="M2,13 L7.5,7.5 L18.5,18.5 L13,24 Z" fill="#c162db"/></svg>
<div style="left:1592.28px;top:221.33px;font-family:'Liberation Sans';font-size:18.86px;color:#f0f0f0;font-weight:400;line-height:1;white-space:nowrap;transform:scaleX(0.9039);transform-origin:0 0;">Clear</div>
<svg style="position:absolute;left:1636.70px;top:225.45px;overflow:visible;" width="11.0" height="8.1" viewBox="0 0 11.0 8.1"><polyline points="2,2 5.50,6.10 9.00,2" fill="none" stroke="#e6e6e6" stroke-width="1.75" stroke-linecap="round" stroke-linejoin="round"/></svg>
<svg style="position:absolute;left:1729.00px;top:141.00px;overflow:visible;" width="46" height="42" viewBox="0 0 46 42"><text x="0" y="19.3" font-family="Liberation Sans" font-size="25" fill="#3d96dc">A</text>
      <path d="M2.5,22.5 H14 L2.5,39.5 H14.5" fill="none" stroke="#d6d6d6" stroke-width="1.8"/>
      <path d="M20.5,10.5 H42 L34,21.5 V33 H28.5 V21.5 Z" fill="none" stroke="#d6d6d6" stroke-width="1.8" stroke-linejoin="round"/></svg>
<div style="left:1724.04px;top:193.56px;font-family:'Liberation Sans';font-size:18.0px;color:#f0f0f0;font-weight:400;line-height:1;white-space:nowrap;transform:scaleX(1.0758);transform-origin:0 0;">Sort &amp;</div>
<div style="left:1722.90px;top:217.66px;font-family:'Liberation Sans';font-size:18.0px;color:#f0f0f0;font-weight:400;line-height:1;white-space:nowrap;transform:scaleX(1.0148);transform-origin:0 0;">Filter</div>
<svg style="position:absolute;left:1766.50px;top:220.95px;overflow:visible;" width="11.0" height="8.1" viewBox="0 0 11.0 8.1"><polyline points="2,2 5.50,6.10 9.00,2" fill="none" stroke="#e6e6e6" stroke-width="1.75" stroke-linecap="round" stroke-linejoin="round"/></svg>
<svg style="position:absolute;left:1797.00px;top:140.00px;overflow:visible;" width="47" height="46" viewBox="0 0 47 46"><circle cx="29" cy="17" r="15" fill="none" stroke="#d6d6d6" stroke-width="1.9"/><path d="M18.5,27.5 L2,44" stroke="#d6d6d6" stroke-width="2"/></svg>
<div style="left:1794.16px;top:193.56px;font-family:'Liberation Sans';font-size:18.0px;color:#f0f0f0;font-weight:400;line-height:1;white-space:nowrap;transform:scaleX(1.0547);transform-origin:0 0;">Find &amp;</div>
<div style="left:1789.48px;top:217.66px;font-family:'Liberation Sans';font-size:18.0px;color:#f0f0f0;font-weight:400;line-height:1;white-space:nowrap;transform:scaleX(0.9484);transform-origin:0 0;">Select</div>
<svg style="position:absolute;left:1840.50px;top:220.95px;overflow:visible;" width="11.0" height="8.1" viewBox="0 0 11.0 8.1"><polyline points="2,2 5.50,6.10 9.00,2" fill="none" stroke="#e6e6e6" stroke-width="1.75" stroke-linecap="round" stroke-linejoin="round"/></svg>
<div style="left:1681.54px;top:256.05px;font-family:'Liberation Sans';font-size:16.71px;color:#f0f0f0;font-weight:400;line-height:1;white-space:nowrap;transform:scaleX(0.9607);transform-origin:0 0;">Editing</div>
<div style="left:1868.20px;top:135.00px;width:1.00px;height:134.00px;background:#5c5c5c;"></div>
<svg style="position:absolute;left:1894.00px;top:140.00px;overflow:visible;" width="44" height="44" viewBox="0 0 44 44"><rect x="1.8" y="1.8" width="39.5" height="39.5" fill="none" stroke="#d4502a" stroke-width="2.6"/><rect x="6.5" y="6.5" width="12.5" height="12.5" fill="none" stroke="#d4502a" stroke-width="2.2"/><rect x="24" y="6.5" width="12.5" height="12.5" fill="none" stroke="#d4502a" stroke-width="2.2"/><rect x="6.5" y="24" width="12.5" height="12.5" fill="none" stroke="#d4502a" stroke-width="2.2"/><rect x="24" y="24" width="12.5" height="12.5" fill="none" stroke="#d4502a" stroke-width="2.2"/></svg>
<div style="left:1884.06px;top:193.56px;font-family:'Liberation Sans';font-size:18.0px;color:#f0f0f0;font-weight:400;line-height:1;white-space:nowrap;transform:scaleX(1.0531);transform-origin:0 0;">Add-ins</div>
<div style="left:1887.03px;top:256.05px;font-family:'Liberation Sans';font-size:16.71px;color:#f0f0f0;font-weight:400;line-height:1;white-space:nowrap;transform:scaleX(0.9709);transform-origin:0 0;">Add-ins</div>
<div style="left:1962.90px;top:135.00px;width:1.00px;height:134.00px;background:#5c5c5c;"></div>
<svg style="position:absolute;left:1988.00px;top:140.00px;overflow:visible;" width="46" height="46" viewBox="0 0 46 46"><rect x="1.7" y="1.6" width="40.3" height="40.3" fill="none" stroke="#d8d8d8" stroke-width="1.7"/>
      <rect x="2.5" y="2.5" width="38.7" height="4.2" fill="#5e5e5e"/>
      <path d="M1.7,7.8 H42 M1.7,19.6 H42 M1.7,30 H42 M15,30 V41.9 M28.8,30 V41.9" stroke="#cfcfcf" stroke-width="1.5"/>
      <circle cx="20.2" cy="18.4" r="12.4" fill="#292929" stroke="#e0e0e0" stroke-width="1.9"/><path d="M28.6,27.4 L41,40.2" stroke="#e0e0e0" stroke-width="2"/>
      <rect x="14.2" y="17.5" width="3.6" height="9" fill="#b0b0b0" stroke="#e0e0e0" stroke-width="0.8"/><rect x="18.5" y="11" width="3.8" height="15.5" fill="#292929" stroke="#e0e0e0" stroke-width="1.4"/><rect x="23" y="13.8" width="3.8" height="12.7" fill="#1a73c9" stroke="#7cc0f0" stroke-width="1"/></svg>
<div style="left:1978.94px;top:193.56px;font-family:'Liberation Sans';font-size:18.0px;color:#f0f0f0;font-weight:400;line-height:1;white-space:nowrap;transform:scaleX(0.9824);transform-origin:0 0;">Analyze</div>
<div style="left:1991.53px;top:217.66px;font-family:'Liberation Sans';font-size:18.0px;color:#f0f0f0;font-weight:400;line-height:1;white-space:nowrap;transform-origin:0 0;">Data</div>
<div style="left:2055.60px;top:135.00px;width:1.00px;height:134.00px;background:#5c5c5c;"></div>
<svg style="position:absolute;left:2156.00px;top:142.50px;overflow:visible;" width="113" height="113" viewBox="0 0 113 113"><circle cx="56.3" cy="56.2" r="56" fill="#fff"/>
      <rect x="26" y="30.7" width="61" height="52.6" fill="#5b64e6"/>
      <rect x="34" y="39" width="18.6" height="14.2" fill="#fff"/><rect x="60.3" y="39" width="18.6" height="14.2" fill="#fff"/>
      <rect x="34" y="60.9" width="18.6" height="14.3" fill="#fff"/><rect x="60.3" y="60.9" width="18.6" height="14.3" fill="#fff"/></svg>
<div style="left:2292.74px;top:155.97px;font-family:'Liberation Sans';font-size:50.0px;color:#fff;font-weight:700;line-height:1;white-space:nowrap;transform:scaleX(0.8188);transform-origin:0 0;-webkit-text-stroke:1.6px #fff;">F</div>
<div style="left:2317.04px;top:155.97px;font-family:'Liberation Sans';font-size:50.0px;color:#fff;font-weight:700;line-height:1;white-space:nowrap;transform:scaleX(1.2522);transform-origin:0 0;-webkit-text-stroke:1.6px #fff;">I</div>
<div style="left:2333.15px;top:155.97px;font-family:'Liberation Sans';font-size:50.0px;color:#fff;font-weight:700;line-height:1;white-space:nowrap;transform:scaleX(1.0163);transform-origin:0 0;-webkit-text-stroke:1.6px #fff;">N</div>
<div style="left:2369.16px;top:155.97px;font-family:'Liberation Sans';font-size:50.0px;color:#fff;font-weight:700;line-height:1;white-space:nowrap;transform:scaleX(1.0461);transform-origin:0 0;-webkit-text-stroke:1.6px #fff;">M</div>
<div style="left:2452.32px;top:155.97px;font-family:'Liberation Sans';font-size:50.0px;color:#fff;font-weight:700;line-height:1;white-space:nowrap;transform:scaleX(1.0927);transform-origin:0 0;-webkit-text-stroke:1.6px #fff;">D</div>
<div style="left:2492.59px;top:155.97px;font-family:'Liberation Sans';font-size:50.0px;color:#fff;font-weight:700;line-height:1;white-space:nowrap;transform:scaleX(0.8041);transform-origin:0 0;-webkit-text-stroke:1.6px #fff;">E</div>
<div style="left:2519.85px;top:155.97px;font-family:'Liberation Sans';font-size:50.0px;color:#fff;font-weight:700;line-height:1;white-space:nowrap;transform:scaleX(0.8514);transform-origin:0 0;-webkit-text-stroke:1.6px #fff;">L</div>
<div style="left:2543.61px;top:155.97px;font-family:'Liberation Sans';font-size:50.0px;color:#fff;font-weight:700;line-height:1;white-space:nowrap;transform:scaleX(0.9649);transform-origin:0 0;-webkit-text-stroke:1.6px #fff;">S</div>
<div style="left:2574.66px;top:155.97px;font-family:'Liberation Sans';font-size:50.0px;color:#fff;font-weight:700;line-height:1;white-space:nowrap;transform:scaleX(0.8474);transform-origin:0 0;-webkit-text-stroke:1.6px #fff;">L</div>
<div style="left:2596.04px;top:155.97px;font-family:'Liberation Sans';font-size:50.0px;color:#fff;font-weight:700;line-height:1;white-space:nowrap;transform:scaleX(1.0196);transform-origin:0 0;-webkit-text-stroke:1.6px #fff;">A</div>
<div style="left:2629.75px;top:155.97px;font-family:'Liberation Sans';font-size:50.0px;color:#fff;font-weight:700;line-height:1;white-space:nowrap;transform:scaleX(0.7500);transform-origin:0 0;-webkit-text-stroke:1.6px #fff;">B</div>
<svg style="position:absolute;left:2412.00px;top:150.00px;overflow:visible;" width="39" height="50" viewBox="0 0 39 50"><path d="M12.5,17.2 A13.6,13.6 0 1 0 25.5,17.2" fill="none" stroke="#fff" stroke-width="7.8"/><rect x="15.3" y="4" width="8.6" height="27" rx="4.3" fill="#fff"/></svg>
<div style="left:2293.86px;top:208.99px;font-family:'Liberation Sans';font-size:34.5px;color:#fff;font-weight:400;line-height:1;white-space:nowrap;transform-origin:50% 0;-webkit-text-stroke:0.6px #fff;">T</div>
<div style="left:2340.21px;top:208.99px;font-family:'Liberation Sans';font-size:34.5px;color:#fff;font-weight:400;line-height:1;white-space:nowrap;transform-origin:50% 0;-webkit-text-stroke:0.6px #fff;">e</div>
<div style="left:2383.12px;top:208.99px;font-family:'Liberation Sans';font-size:34.5px;color:#fff;font-weight:400;line-height:1;white-space:nowrap;transform-origin:50% 0;-webkit-text-stroke:0.6px #fff;">m</div>
<div style="left:2435.11px;top:208.99px;font-family:'Liberation Sans';font-size:34.5px;color:#fff;font-weight:400;line-height:1;white-space:nowrap;transform-origin:50% 0;-webkit-text-stroke:0.6px #fff;">p</div>
<div style="left:2479.16px;top:208.99px;font-family:'Liberation Sans';font-size:34.5px;color:#fff;font-weight:400;line-height:1;white-space:nowrap;transform-origin:50% 0;-webkit-text-stroke:0.6px #fff;">l</div>
<div style="left:2511.81px;top:208.99px;font-family:'Liberation Sans';font-size:34.5px;color:#fff;font-weight:400;line-height:1;white-space:nowrap;transform-origin:50% 0;-webkit-text-stroke:0.6px #fff;">a</div>
<div style="left:2554.40px;top:208.99px;font-family:'Liberation Sans';font-size:34.5px;color:#fff;font-weight:400;line-height:1;white-space:nowrap;transform-origin:50% 0;-webkit-text-stroke:0.6px #fff;">t</div>
<div style="left:2592.31px;top:208.99px;font-family:'Liberation Sans';font-size:34.5px;color:#fff;font-weight:400;line-height:1;white-space:nowrap;transform-origin:50% 0;-webkit-text-stroke:0.6px #fff;">e</div>
<div style="left:2633.28px;top:208.99px;font-family:'Liberation Sans';font-size:34.5px;color:#fff;font-weight:400;line-height:1;white-space:nowrap;transform-origin:50% 0;-webkit-text-stroke:0.6px #fff;">s</div>
<svg style="position:absolute;left:2849.20px;top:251.50px;overflow:visible;" width="17" height="11" viewBox="0 0 17 11"><polyline points="2,2 8.50,9.00 15.00,2" fill="none" stroke="#e6e6e6" stroke-width="1.7" stroke-linecap="round" stroke-linejoin="round"/></svg>
<div style="left:11.00px;top:278.00px;width:2851.00px;height:23.30px;background:#0c0c0c;"></div>
<div style="left:11.00px;top:301.30px;width:36.00px;height:1369.00px;background:#0c0c0c;"></div>
<div style="left:47.00px;top:301.30px;width:2814.00px;height:1368.70px;background:#fff;"></div>
<div style="left:2862.50px;top:280.00px;width:26.50px;height:1390.00px;background:#141414;border-radius:13px;"></div>
<svg style="position:absolute;left:2868.80px;top:285.70px;overflow:visible;" width="14.4" height="10.1" viewBox="0 0 14.4 10.1"><path d="M7.2,0.5 L14,9.6 H0.4 Z" fill="#9a9a9a" stroke="#9a9a9a" stroke-width="0.8" stroke-linejoin="round"/></svg>
<div style="left:2870.10px;top:303.90px;width:12.10px;height:1335.70px;background:#9b9b9b;border-radius:6px;"></div>
<svg style="position:absolute;left:2868.80px;top:1653.80px;overflow:visible;" width="14.4" height="10.2" viewBox="0 0 14.4 10.2"><path d="M0.4,0.5 H14 L7.2,9.7 Z" fill="#9a9a9a" stroke="#9a9a9a" stroke-width="0.8" stroke-linejoin="round"/></svg>
<svg style="position:absolute;left:44.00px;top:1684.00px;overflow:visible;" width="13" height="17" viewBox="0 0 13 17"><polyline points="11,1.5 2.5,8.5 11,15.5" fill="none" stroke="#8a8a8a" stroke-width="1.7"/></svg>
<svg style="position:absolute;left:93.00px;top:1684.00px;overflow:visible;" width="13" height="17" viewBox="0 0 13 17"><polyline points="2,1.5 10.5,8.5 2,15.5" fill="none" stroke="#e6e6e6" stroke-width="1.7"/></svg>
<div style="left:189.23px;top:1685.24px;font-family:'Liberation Sans';font-size:21.57px;color:#fff;font-weight:400;line-height:1;white-space:nowrap;transform:scaleX(0.9794);transform-origin:0 0;">Contents</div>
<div style="left:299.00px;top:1676.30px;width:128.00px;height:35.40px;background:#ffee6e;border-radius:7px;"></div>
<div style="left:312.45px;top:1685.24px;font-family:'Liberation Sans';font-size:21.57px;color:#111;font-weight:400;line-height:1;white-space:nowrap;transform:scaleX(0.9659);transform-origin:0 0;">Dashboard</div>
<div style="left:440.30px;top:1676.30px;width:105.70px;height:35.40px;background:#ffee6e;border-radius:7px;"></div>
<div style="left:453.29px;top:1685.24px;font-family:'Liberation Sans';font-size:21.57px;color:#111;font-weight:400;line-height:1;white-space:nowrap;transform:scaleX(0.9315);transform-origin:0 0;">Revenue</div>
<div style="left:559.30px;top:1676.30px;width:157.70px;height:35.40px;background:#ffee6e;border-radius:7px;"></div>
<div style="left:571.03px;top:1685.24px;font-family:'Liberation Sans';font-size:21.57px;color:#111;font-weight:400;line-height:1;white-space:nowrap;transform:scaleX(0.9022);transform-origin:0 0;">COGS &amp; OPEX</div>
<div style="left:729.70px;top:1676.30px;width:89.30px;height:35.40px;background:#ffee6e;border-radius:7px;"></div>
<div style="left:742.26px;top:1685.24px;font-family:'Liberation Sans';font-size:21.57px;color:#111;font-weight:400;line-height:1;white-space:nowrap;transform:scaleX(0.9616);transform-origin:0 0;">Payroll</div>
<div style="left:832.00px;top:1676.30px;width:86.80px;height:35.40px;background:#ffee6e;border-radius:7px;"></div>
<div style="left:844.29px;top:1685.24px;font-family:'Liberation Sans';font-size:21.57px;color:#111;font-weight:400;line-height:1;white-space:nowrap;transform:scaleX(0.8565);transform-origin:0 0;">CAPEX</div>
<div style="left:932.20px;top:1676.30px;width:112.80px;height:35.40px;background:#ffee6e;border-radius:7px;"></div>
<div style="left:943.52px;top:1685.24px;font-family:'Liberation Sans';font-size:21.57px;color:#111;font-weight:400;line-height:1;white-space:nowrap;transform:scaleX(0.9896);transform-origin:0 0;">CapTable</div>
<div style="left:1058.00px;top:1676.30px;width:90.00px;height:35.40px;background:#ffee6e;border-radius:7px;"></div>
<div style="left:1069.74px;top:1685.24px;font-family:'Liberation Sans';font-size:21.57px;color:#111;font-weight:400;line-height:1;white-space:nowrap;transform:scaleX(0.9762);transform-origin:0 0;">Capital</div>
<div style="left:1161.00px;top:1676.30px;width:42.00px;height:35.40px;background:#4bb3e6;border-radius:7px;"></div>
<div style="left:1173.37px;top:1685.24px;font-family:'Liberation Sans';font-size:21.57px;color:#111;font-weight:400;line-height:1;white-space:nowrap;transform:scaleX(0.8714);transform-origin:0 0;">IS</div>
<div style="left:1216.00px;top:1676.30px;width:48.00px;height:35.40px;background:#4bb3e6;border-radius:7px;"></div>
<div style="left:1228.20px;top:1685.24px;font-family:'Liberation Sans';font-size:21.57px;color:#111;font-weight:400;line-height:1;white-space:nowrap;transform:scaleX(0.8524);transform-origin:0 0;">CF</div>
<div style="left:1277.00px;top:1676.30px;width:47.70px;height:35.40px;background:#4bb3e6;border-radius:7px;"></div>
<div style="left:1289.94px;top:1685.24px;font-family:'Liberation Sans';font-size:21.57px;color:#111;font-weight:400;line-height:1;white-space:nowrap;transform:scaleX(0.8213);transform-origin:0 0;">BS</div>
<div style="left:1337.70px;top:1676.30px;width:115.30px;height:35.40px;background:#4bb3e6;border-radius:7px;"></div>
<div style="left:1349.79px;top:1685.24px;font-family:'Liberation Sans';font-size:21.57px;color:#111;font-weight:400;line-height:1;white-space:nowrap;transform:scaleX(0.9357);transform-origin:0 0;">Scenarios</div>
<div style="left:1466.00px;top:1676.30px;width:114.80px;height:35.40px;background:#4bb3e6;border-radius:7px;"></div>
<div style="left:1477.58px;top:1685.24px;font-family:'Liberation Sans';font-size:21.57px;color:#111;font-weight:400;line-height:1;white-space:nowrap;transform:scaleX(1.0182);transform-origin:0 0;">Valuation</div>
<div style="left:1593.70px;top:1676.30px;width:114.30px;height:35.40px;background:#4bb3e6;border-radius:7px;"></div>
<div style="left:1607.56px;top:1685.24px;font-family:'Liberation Sans';font-size:21.57px;color:#111;font-weight:400;line-height:1;white-space:nowrap;transform:scaleX(0.9590);transform-origin:0 0;">Summary</div>
<div style="left:1721.00px;top:1676.30px;width:48.00px;height:35.40px;background:#4bb3e6;border-radius:7px;"></div>
<div style="left:1732.72px;top:1685.24px;font-family:'Liberation Sans';font-size:21.57px;color:#111;font-weight:400;line-height:1;white-space:nowrap;transform:scaleX(0.8366);transform-origin:0 0;">BE</div>
<svg style="position:absolute;left:1770.00px;top:1668.00px;overflow:visible;" width="96" height="46" viewBox="0 0 96 46"><defs><linearGradient id="rg" x1="0" y1="0" x2="0" y2="1"><stop offset="0" stop-color="#ffffff"/><stop offset="0.35" stop-color="#f7fbfe"/><stop offset="1" stop-color="#c9e2f4"/></linearGradient></defs>
      <path d="M5.8,0 H89.7 V2 A6,6 0 0 0 83.7,8 V37.7 A6,6 0 0 1 77.7,43.7 H17.8 A6,6 0 0 1 11.8,37.7 V8 A6,6 0 0 0 5.8,2 Z" fill="url(#rg)"/></svg>
<div style="left:1792.32px;top:1680.84px;font-family:'Liberation Sans';font-size:20.86px;color:#111;font-weight:400;line-height:1;white-space:nowrap;transform:scaleX(0.9425);transform-origin:50% 0;">ROIC</div>
<div style="left:1794.00px;top:1705.00px;width:48.00px;height:2.90px;background:#1e8a4c;"></div>
<div style="left:1867.00px;top:1676.30px;width:84.70px;height:35.40px;background:#4bb3e6;border-radius:7px;"></div>
<div style="left:1878.68px;top:1685.24px;font-family:'Liberation Sans';font-size:21.57px;color:#111;font-weight:400;line-height:1;white-space:nowrap;transform:scaleX(0.9454);transform-origin:0 0;">Charts</div>
<div style="left:1965.00px;top:1676.30px;width:64.00px;height:35.40px;background:#4bb3e6;border-radius:7px;"></div>
<div style="left:1977.37px;top:1685.24px;font-family:'Liberation Sans';font-size:21.57px;color:#111;font-weight:400;line-height:1;white-space:nowrap;transform:scaleX(0.8706);transform-origin:0 0;">KPIs</div>
<div style="left:2042.3px;top:1676.3px;width:29.3px;height:35.4px;overflow:hidden;background:#4bb3e6;border-radius:7px 0 0 7px;"><div style="left:10.88px;top:7.81px;font-size:21.95px;color:#111;line-height:1;white-space:nowrap;">Sc</div></div>
<div style="left:291.90px;top:1680.00px;width:1.20px;height:27.80px;background:#5a5a5a;"></div>
<div style="left:432.70px;top:1680.00px;width:1.20px;height:27.80px;background:#5a5a5a;"></div>
<div style="left:551.70px;top:1680.00px;width:1.20px;height:27.80px;background:#5a5a5a;"></div>
<div style="left:722.70px;top:1680.00px;width:1.20px;height:27.80px;background:#5a5a5a;"></div>
<div style="left:824.70px;top:1680.00px;width:1.20px;height:27.80px;background:#5a5a5a;"></div>
<div style="left:924.50px;top:1680.00px;width:1.20px;height:27.80px;background:#5a5a5a;"></div>
<div style="left:1050.70px;top:1680.00px;width:1.20px;height:27.80px;background:#5a5a5a;"></div>
<div style="left:1153.70px;top:1680.00px;width:1.20px;height:27.80px;background:#5a5a5a;"></div>
<div style="left:1208.70px;top:1680.00px;width:1.20px;height:27.80px;background:#5a5a5a;"></div>
<div style="left:1269.70px;top:1680.00px;width:1.20px;height:27.80px;background:#5a5a5a;"></div>
<div style="left:1330.40px;top:1680.00px;width:1.20px;height:27.80px;background:#5a5a5a;"></div>
<div style="left:1458.70px;top:1680.00px;width:1.20px;height:27.80px;background:#5a5a5a;"></div>
<div style="left:1586.50px;top:1680.00px;width:1.20px;height:27.80px;background:#5a5a5a;"></div>
<div style="left:1713.70px;top:1680.00px;width:1.20px;height:27.80px;background:#5a5a5a;"></div>
<div style="left:1774.90px;top:1680.00px;width:1.20px;height:27.80px;background:#5a5a5a;"></div>
<div style="left:1859.90px;top:1680.00px;width:1.20px;height:27.80px;background:#5a5a5a;"></div>
<div style="left:1957.70px;top:1680.00px;width:1.20px;height:27.80px;background:#5a5a5a;"></div>
<div style="left:2034.80px;top:1680.00px;width:1.20px;height:27.80px;background:#5a5a5a;"></div>
<div style="left:1714.00px;top:1680.00px;width:1.20px;height:27.80px;background:#5a5a5a;"></div>
<svg style="position:absolute;left:2086.00px;top:1688.00px;overflow:visible;" width="18" height="6" viewBox="0 0 18 6"><circle cx="3" cy="3" r="2.2" fill="#e6e6e6"/><circle cx="9" cy="3" r="2.2" fill="#e6e6e6"/><circle cx="15" cy="3" r="2.2" fill="#e6e6e6"/></svg>
<svg style="position:absolute;left:2134.00px;top:1684.00px;overflow:visible;" width="19" height="19" viewBox="0 0 19 19"><path d="M9.5,1 V18 M1,9.5 H18" stroke="#e6e6e6" stroke-width="1.7"/></svg>
<svg style="position:absolute;left:2189.00px;top:1683.00px;overflow:visible;" width="6" height="22" viewBox="0 0 6 22"><circle cx="3" cy="3" r="2" fill="#e6e6e6"/><circle cx="3" cy="11" r="2" fill="#e6e6e6"/><circle cx="3" cy="19" r="2" fill="#e6e6e6"/></svg>
<div style="left:2217.00px;top:1679.40px;width:643.00px;height:27.60px;background:#161616;border-radius:14px;"></div>
<svg style="position:absolute;left:2222.00px;top:1686.00px;overflow:visible;" width="13" height="14" viewBox="0 0 13 14"><path d="M11.5,0.8 V13.2 L1,7 Z" fill="#9a9a9a" stroke="#9a9a9a" stroke-width="0.8" stroke-linejoin="round"/></svg>
<div style="left:2241.60px;top:1686.80px;width:552.30px;height:13.00px;background:#9b9b9b;border-radius:6.5px;"></div>
<svg style="position:absolute;left:2841.00px;top:1686.00px;overflow:visible;" width="13" height="14" viewBox="0 0 13 14"><path d="M1.2,0.8 V13.2 L11.8,7 Z" fill="#9a9a9a" stroke="#9a9a9a" stroke-width="0.8" stroke-linejoin="round"/></svg>
<div style="left:11.00px;top:1717.50px;width:2880.00px;height:33.50px;background:#141414;"></div>
<div style="left:11.00px;top:1717.50px;width:2880.00px;height:1.00px;background:#2c2c2c;"></div>
<div style="left:26.28px;top:1728.45px;font-family:'Liberation Sans';font-size:16.0px;color:#e6e6e6;font-weight:400;line-height:1;white-space:nowrap;transform:scaleX(0.9587);transform-origin:0 0;">Ready</div>
<svg style="position:absolute;left:98.00px;top:1724.50px;overflow:visible;" width="25" height="23" viewBox="0 0 25 23"><path d="M8.5,21 H2 V2 H22 V8.5" fill="none" stroke="#f0f0f0" stroke-width="1.7"/><path d="M2,5.3 H22" stroke="#f0f0f0" stroke-width="1.5"/><path d="M4.5,9.5 H10 M4.5,13 H8.5 M4.5,16.5 H8.5" stroke="#f0f0f0" stroke-width="1.5"/><circle cx="16" cy="15" r="6.6" fill="#141414" stroke="#f0f0f0" stroke-width="1.8"/><circle cx="16" cy="15" r="3.2" fill="#f0f0f0"/></svg>
<svg style="position:absolute;left:145.00px;top:1723.00px;overflow:visible;" width="24" height="24" viewBox="0 0 24 24"><circle cx="10" cy="3.6" r="2.4" fill="none" stroke="#f0f0f0" stroke-width="1.5"/><path d="M1.5,6.8 Q4,8.8 7,8.5 L7.5,13 L4,20.5 a1.2,1.2 0 0 0 2.2,1 L9.6,15.5 L12,17.5 M13,8.3 Q16.5,8 18.5,5.5 a1.2,1.2 0 0 0 -1.8,-1.4 Q14.5,6.5 10,6.5 Q5,6.5 3,4.8 a1.2,1.2 0 0 0 -1.5,2 M13,8.3 L12.4,13" fill="none" stroke="#f0f0f0" stroke-width="1.4" stroke-linejoin="round"/><path d="M13.5,15 L21.5,23 M21.5,15 L13.5,23" stroke="#f0f0f0" stroke-width="1.5"/></svg>
<div style="left:172.05px;top:1728.17px;font-family:'Liberation Sans';font-size:16.57px;color:#f0f0f0;font-weight:700;line-height:1;white-space:nowrap;transform:scaleX(0.9575);transform-origin:0 0;">Accessibility: Investigate</div>
<div style="left:2445.00px;top:1718.50px;width:59.70px;height:32.00px;background:#2a2a2a;"></div>
<svg style="position:absolute;left:2463.00px;top:1724.00px;overflow:visible;" width="22" height="21" viewBox="0 0 22 21"><path d="M1,1 H21 V20 H1 Z M1,7.3 H21 M1,13.6 H21 M7.6,1 V20 M14.3,1 V20" fill="none" stroke="#e6e6e6" stroke-width="1.6"/></svg>
<svg style="position:absolute;left:2522.50px;top:1724.00px;overflow:visible;" width="24" height="21" viewBox="0 0 24 21"><rect x="1" y="1" width="22" height="19" fill="none" stroke="#e6e6e6" stroke-width="1.6"/><rect x="5" y="4.5" width="14" height="12" fill="none" stroke="#e6e6e6" stroke-width="1.4"/><path d="M8,8 H16 M8,11 H16 M8,14 H16" stroke="#e6e6e6" stroke-width="1.2"/></svg>
<svg style="position:absolute;left:2582.00px;top:1724.00px;overflow:visible;" width="25" height="21" viewBox="0 0 25 21"><path d="M2.4,19.3 V1.2 H23.2 V19.3 Z M2.4,10.2 H15.6 V1.2 M9,1.2 V10.2" fill="none" stroke="#e6e6e6" stroke-width="1.6"/></svg>
<div style="left:2632.00px;top:1734.40px;width:13.00px;height:1.20px;background:#e6e6e6;"></div>
<div style="left:2653.00px;top:1734.30px;width:148.00px;height:1.60px;background:#bdbdbd;"></div>
<div style="left:2726.40px;top:1725.40px;width:10.10px;height:18.30px;background:#bdbdbd;border-radius:2px;"></div>
<svg style="position:absolute;left:2807.00px;top:1727.00px;overflow:visible;" width="16" height="16" viewBox="0 0 16 16"><path d="M8,1 V15 M1,8 H15" stroke="#e6e6e6" stroke-width="1.5"/></svg>
<div style="left:2838.73px;top:1728.54px;font-family:'Liberation Sans';font-size:15.43px;color:#e6e6e6;font-weight:400;line-height:1;white-space:nowrap;transform:scaleX(1.0452);transform-origin:0 0;">120%</div>
<div style="left:47.00px;top:278.00px;width:26.00px;height:23.30px;background:#606060;"></div>
<div style="left:47.00px;top:278.00px;width:1.00px;height:23.30px;background:#5a5a5a;"></div>
<div style="left:53.66px;top:281.41px;font-family:'Liberation Sans';font-size:19.0px;color:#e8e8e8;font-weight:400;line-height:1;white-space:nowrap;transform-origin:50% 0;">A</div>
<div style="left:73.00px;top:278.00px;width:1.00px;height:23.30px;background:#5a5a5a;"></div>
<div style="left:114.41px;top:281.41px;font-family:'Liberation Sans';font-size:19.0px;color:#e8e8e8;font-weight:400;line-height:1;white-space:nowrap;transform-origin:50% 0;">B</div>
<div style="left:168.50px;top:278.00px;width:1.00px;height:23.30px;background:#5a5a5a;"></div>
<div style="left:209.63px;top:281.41px;font-family:'Liberation Sans';font-size:19.0px;color:#e8e8e8;font-weight:400;line-height:1;white-space:nowrap;transform-origin:50% 0;">C</div>
<div style="left:264.50px;top:278.00px;width:1.00px;height:23.30px;background:#5a5a5a;"></div>
<div style="left:305.38px;top:281.41px;font-family:'Liberation Sans';font-size:19.0px;color:#e8e8e8;font-weight:400;line-height:1;white-space:nowrap;transform-origin:50% 0;">D</div>
<div style="left:360.00px;top:278.00px;width:1.00px;height:23.30px;background:#5a5a5a;"></div>
<div style="left:401.66px;top:281.41px;font-family:'Liberation Sans';font-size:19.0px;color:#e8e8e8;font-weight:400;line-height:1;white-space:nowrap;transform-origin:50% 0;">E</div>
<div style="left:456.00px;top:278.00px;width:1.00px;height:23.30px;background:#5a5a5a;"></div>
<div style="left:498.20px;top:281.41px;font-family:'Liberation Sans';font-size:19.0px;color:#e8e8e8;font-weight:400;line-height:1;white-space:nowrap;transform-origin:50% 0;">F</div>
<div style="left:552.00px;top:278.00px;width:1.00px;height:23.30px;background:#5a5a5a;"></div>
<div style="left:622.86px;top:281.41px;font-family:'Liberation Sans';font-size:19.0px;color:#e8e8e8;font-weight:400;line-height:1;white-space:nowrap;transform-origin:50% 0;">G</div>
<div style="left:708.50px;top:278.00px;width:1.00px;height:23.30px;background:#5a5a5a;"></div>
<div style="left:779.68px;top:281.41px;font-family:'Liberation Sans';font-size:19.0px;color:#e8e8e8;font-weight:400;line-height:1;white-space:nowrap;transform-origin:50% 0;">H</div>
<div style="left:864.60px;top:278.00px;width:1.00px;height:23.30px;background:#5a5a5a;"></div>
<div style="left:939.86px;top:281.41px;font-family:'Liberation Sans';font-size:19.0px;color:#e8e8e8;font-weight:400;line-height:1;white-space:nowrap;transform-origin:50% 0;">I</div>
<div style="left:1020.40px;top:278.00px;width:1.00px;height:23.30px;background:#5a5a5a;"></div>
<div style="left:1093.60px;top:281.41px;font-family:'Liberation Sans';font-size:19.0px;color:#e8e8e8;font-weight:400;line-height:1;white-space:nowrap;transform-origin:50% 0;">J</div>
<div style="left:1176.30px;top:278.00px;width:1.00px;height:23.30px;background:#5a5a5a;"></div>
<div style="left:1248.01px;top:281.41px;font-family:'Liberation Sans';font-size:19.0px;color:#e8e8e8;font-weight:400;line-height:1;white-space:nowrap;transform-origin:50% 0;">K</div>
<div style="left:1332.40px;top:278.00px;width:1.00px;height:23.30px;background:#5a5a5a;"></div>
<div style="left:1405.16px;top:281.41px;font-family:'Liberation Sans';font-size:19.0px;color:#e8e8e8;font-weight:400;line-height:1;white-space:nowrap;transform-origin:50% 0;">L</div>
<div style="left:1488.50px;top:278.00px;width:1.00px;height:23.30px;background:#5a5a5a;"></div>
<div style="left:1558.64px;top:281.41px;font-family:'Liberation Sans';font-size:19.0px;color:#e8e8e8;font-weight:400;line-height:1;white-space:nowrap;transform-origin:50% 0;">M</div>
<div style="left:1644.60px;top:278.00px;width:1.00px;height:23.30px;background:#5a5a5a;"></div>
<div style="left:1715.63px;top:281.41px;font-family:'Liberation Sans';font-size:19.0px;color:#e8e8e8;font-weight:400;line-height:1;white-space:nowrap;transform-origin:50% 0;">N</div>
<div style="left:1800.40px;top:278.00px;width:1.00px;height:23.30px;background:#5a5a5a;"></div>
<div style="left:1807.01px;top:281.41px;font-family:'Liberation Sans';font-size:19.0px;color:#e8e8e8;font-weight:400;line-height:1;white-space:nowrap;transform-origin:50% 0;">O</div>
<div style="left:1828.40px;top:278.00px;width:1.00px;height:23.30px;background:#5a5a5a;"></div>
<div style="left:1868.11px;top:281.41px;font-family:'Liberation Sans';font-size:19.0px;color:#e8e8e8;font-weight:400;line-height:1;white-space:nowrap;transform-origin:50% 0;">P</div>
<div style="left:1920.50px;top:278.00px;width:1.00px;height:23.30px;background:#5a5a5a;"></div>
<div style="left:1975.16px;top:281.41px;font-family:'Liberation Sans';font-size:19.0px;color:#e8e8e8;font-weight:400;line-height:1;white-space:nowrap;transform-origin:50% 0;">Q</div>
<div style="left:2044.60px;top:278.00px;width:1.00px;height:23.30px;background:#5a5a5a;"></div>
<div style="left:2083.78px;top:281.41px;font-family:'Liberation Sans';font-size:19.0px;color:#e8e8e8;font-weight:400;line-height:1;white-space:nowrap;transform-origin:50% 0;">R</div>
<div style="left:2136.70px;top:278.00px;width:1.00px;height:23.30px;background:#5a5a5a;"></div>
<div style="left:2176.26px;top:281.41px;font-family:'Liberation Sans';font-size:19.0px;color:#e8e8e8;font-weight:400;line-height:1;white-space:nowrap;transform-origin:50% 0;">S</div>
<div style="left:2228.50px;top:278.00px;width:1.00px;height:23.30px;background:#5a5a5a;"></div>
<div style="left:2268.70px;top:281.41px;font-family:'Liberation Sans';font-size:19.0px;color:#e8e8e8;font-weight:400;line-height:1;white-space:nowrap;transform-origin:50% 0;">T</div>
<div style="left:2320.50px;top:278.00px;width:1.00px;height:23.30px;background:#5a5a5a;"></div>
<div style="left:2359.53px;top:281.41px;font-family:'Liberation Sans';font-size:19.0px;color:#e8e8e8;font-weight:400;line-height:1;white-space:nowrap;transform-origin:50% 0;">U</div>
<div style="left:2412.30px;top:278.00px;width:1.00px;height:23.30px;background:#5a5a5a;"></div>
<div style="left:2452.11px;top:281.41px;font-family:'Liberation Sans';font-size:19.0px;color:#e8e8e8;font-weight:400;line-height:1;white-space:nowrap;transform-origin:50% 0;">V</div>
<div style="left:2504.60px;top:278.00px;width:1.00px;height:23.30px;background:#5a5a5a;"></div>
<div style="left:2541.53px;top:281.41px;font-family:'Liberation Sans';font-size:19.0px;color:#e8e8e8;font-weight:400;line-height:1;white-space:nowrap;transform-origin:50% 0;">W</div>
<div style="left:2596.40px;top:278.00px;width:1.00px;height:23.30px;background:#5a5a5a;"></div>
<div style="left:2636.11px;top:281.41px;font-family:'Liberation Sans';font-size:19.0px;color:#e8e8e8;font-weight:400;line-height:1;white-space:nowrap;transform-origin:50% 0;">X</div>
<div style="left:2688.50px;top:278.00px;width:1.00px;height:23.30px;background:#5a5a5a;"></div>
<div style="left:2728.11px;top:281.41px;font-family:'Liberation Sans';font-size:19.0px;color:#e8e8e8;font-weight:400;line-height:1;white-space:nowrap;transform-origin:50% 0;">Y</div>
<div style="left:2780.40px;top:278.00px;width:1.00px;height:23.30px;background:#5a5a5a;"></div>
<div style="left:2820.70px;top:281.41px;font-family:'Liberation Sans';font-size:19.0px;color:#e8e8e8;font-weight:400;line-height:1;white-space:nowrap;transform-origin:50% 0;">Z</div>
<div style="left:47.00px;top:278.00px;width:1.00px;height:23.30px;background:#c8c8c8;"></div>
<div style="left:72.50px;top:278.00px;width:1.00px;height:23.30px;background:#c8c8c8;"></div>
<div style="left:47.00px;top:300.00px;width:26.50px;height:2.00px;background:#1e7e45;"></div>
<svg style="position:absolute;left:28.00px;top:282.00px;overflow:visible;" width="17" height="16" viewBox="0 0 17 16"><polygon points="16,0 16,16 0,16" fill="#7a7a7a"/></svg>
<div style="left:11.00px;top:301.30px;width:36.00px;height:37.70px;background:#6b6b6b;"></div>
<div style="left:11.00px;top:338.50px;width:36.00px;height:1.00px;background:#4a4a4a;"></div>
<div style="left:11px;top:301.30px;width:36px;height:37.70px;overflow:hidden;"><div style="left:0;width:36px;text-align:center;top:17.60px;font-size:18.43px;color:#e8e8e8;line-height:1;white-space:nowrap;">1</div></div>
<div style="left:11.00px;top:372.70px;width:36.00px;height:1.00px;background:#4a4a4a;"></div>
<div style="left:11px;top:339.00px;width:36px;height:34.20px;overflow:hidden;"><div style="left:0;width:36px;text-align:center;top:14.10px;font-size:18.43px;color:#e8e8e8;line-height:1;white-space:nowrap;">2</div></div>
<div style="left:11.00px;top:407.60px;width:36.00px;height:1.00px;background:#4a4a4a;"></div>
<div style="left:11px;top:373.20px;width:36px;height:34.90px;overflow:hidden;"><div style="left:0;width:36px;text-align:center;top:14.80px;font-size:18.43px;color:#e8e8e8;line-height:1;white-space:nowrap;">3</div></div>
<div style="left:11.00px;top:432.90px;width:36.00px;height:1.00px;background:#4a4a4a;"></div>
<div style="left:11px;top:408.10px;width:36px;height:25.30px;overflow:hidden;"><div style="left:0;width:36px;text-align:center;top:5.20px;font-size:18.43px;color:#e8e8e8;line-height:1;white-space:nowrap;">4</div></div>
<div style="left:11.00px;top:462.90px;width:36.00px;height:1.00px;background:#4a4a4a;"></div>
<div style="left:11px;top:433.40px;width:36px;height:30.00px;overflow:hidden;"><div style="left:0;width:36px;text-align:center;top:9.90px;font-size:18.43px;color:#e8e8e8;line-height:1;white-space:nowrap;">5</div></div>
<div style="left:11.00px;top:470.90px;width:36.00px;height:1.00px;background:#4a4a4a;"></div>
<div style="left:11px;top:463.40px;width:36px;height:8.00px;overflow:hidden;"><div style="left:0;width:36px;text-align:center;top:-12.10px;font-size:18.43px;color:#e8e8e8;line-height:1;white-space:nowrap;">6</div></div>
<div style="left:11.00px;top:500.70px;width:36.00px;height:1.00px;background:#4a4a4a;"></div>
<div style="left:11px;top:471.40px;width:36px;height:29.80px;overflow:hidden;"><div style="left:0;width:36px;text-align:center;top:9.70px;font-size:18.43px;color:#e8e8e8;line-height:1;white-space:nowrap;">7</div></div>
<div style="left:11.00px;top:526.70px;width:36.00px;height:1.00px;background:#4a4a4a;"></div>
<div style="left:11px;top:501.20px;width:36px;height:26.00px;overflow:hidden;"><div style="left:0;width:36px;text-align:center;top:5.90px;font-size:18.43px;color:#e8e8e8;line-height:1;white-space:nowrap;">8</div></div>
<div style="left:11.00px;top:562.80px;width:36.00px;height:1.00px;background:#4a4a4a;"></div>
<div style="left:11px;top:527.20px;width:36px;height:36.10px;overflow:hidden;"><div style="left:0;width:36px;text-align:center;top:16.00px;font-size:18.43px;color:#e8e8e8;line-height:1;white-space:nowrap;">9</div></div>
<div style="left:11.00px;top:600.00px;width:36.00px;height:1.00px;background:#4a4a4a;"></div>
<div style="left:11px;top:563.30px;width:36px;height:37.20px;overflow:hidden;"><div style="left:0;width:36px;text-align:center;top:17.10px;font-size:18.43px;color:#e8e8e8;line-height:1;white-space:nowrap;">10</div></div>
<div style="left:11.00px;top:637.00px;width:36.00px;height:1.00px;background:#4a4a4a;"></div>
<div style="left:11px;top:600.50px;width:36px;height:37.00px;overflow:hidden;"><div style="left:0;width:36px;text-align:center;top:16.90px;font-size:18.43px;color:#e8e8e8;line-height:1;white-space:nowrap;">11</div></div>
<div style="left:11.00px;top:674.02px;width:36.00px;height:1.00px;background:#4a4a4a;"></div>
<div style="left:11px;top:637.50px;width:36px;height:37.02px;overflow:hidden;"><div style="left:0;width:36px;text-align:center;top:16.92px;font-size:18.43px;color:#e8e8e8;line-height:1;white-space:nowrap;">12</div></div>
<div style="left:11.00px;top:711.04px;width:36.00px;height:1.00px;background:#4a4a4a;"></div>
<div style="left:11px;top:674.52px;width:36px;height:37.02px;overflow:hidden;"><div style="left:0;width:36px;text-align:center;top:16.92px;font-size:18.43px;color:#e8e8e8;line-height:1;white-space:nowrap;">13</div></div>
<div style="left:11.00px;top:748.06px;width:36.00px;height:1.00px;background:#4a4a4a;"></div>
<div style="left:11px;top:711.54px;width:36px;height:37.02px;overflow:hidden;"><div style="left:0;width:36px;text-align:center;top:16.92px;font-size:18.43px;color:#e8e8e8;line-height:1;white-space:nowrap;">14</div></div>
<div style="left:11.00px;top:785.08px;width:36.00px;height:1.00px;background:#4a4a4a;"></div>
<div style="left:11px;top:748.56px;width:36px;height:37.02px;overflow:hidden;"><div style="left:0;width:36px;text-align:center;top:16.92px;font-size:18.43px;color:#e8e8e8;line-height:1;white-space:nowrap;">15</div></div>
<div style="left:11.00px;top:822.10px;width:36.00px;height:1.00px;background:#4a4a4a;"></div>
<div style="left:11px;top:785.58px;width:36px;height:37.02px;overflow:hidden;"><div style="left:0;width:36px;text-align:center;top:16.92px;font-size:18.43px;color:#e8e8e8;line-height:1;white-space:nowrap;">16</div></div>
<div style="left:11.00px;top:859.12px;width:36.00px;height:1.00px;background:#4a4a4a;"></div>
<div style="left:11px;top:822.60px;width:36px;height:37.02px;overflow:hidden;"><div style="left:0;width:36px;text-align:center;top:16.92px;font-size:18.43px;color:#e8e8e8;line-height:1;white-space:nowrap;">17</div></div>
<div style="left:11.00px;top:896.14px;width:36.00px;height:1.00px;background:#4a4a4a;"></div>
<div style="left:11px;top:859.62px;width:36px;height:37.02px;overflow:hidden;"><div style="left:0;width:36px;text-align:center;top:16.92px;font-size:18.43px;color:#e8e8e8;line-height:1;white-space:nowrap;">18</div></div>
<div style="left:11.00px;top:933.16px;width:36.00px;height:1.00px;background:#4a4a4a;"></div>
<div style="left:11px;top:896.64px;width:36px;height:37.02px;overflow:hidden;"><div style="left:0;width:36px;text-align:center;top:16.92px;font-size:18.43px;color:#e8e8e8;line-height:1;white-space:nowrap;">19</div></div>
<div style="left:11.00px;top:970.18px;width:36.00px;height:1.00px;background:#4a4a4a;"></div>
<div style="left:11px;top:933.66px;width:36px;height:37.02px;overflow:hidden;"><div style="left:0;width:36px;text-align:center;top:16.92px;font-size:18.43px;color:#e8e8e8;line-height:1;white-space:nowrap;">20</div></div>
<div style="left:11.00px;top:1006.90px;width:36.00px;height:1.00px;background:#4a4a4a;"></div>
<div style="left:11px;top:970.70px;width:36px;height:36.70px;overflow:hidden;"><div style="left:0;width:36px;text-align:center;top:16.60px;font-size:18.43px;color:#e8e8e8;line-height:1;white-space:nowrap;">21</div></div>
<div style="left:11.00px;top:1044.00px;width:36.00px;height:1.00px;background:#4a4a4a;"></div>
<div style="left:11px;top:1007.40px;width:36px;height:37.10px;overflow:hidden;"><div style="left:0;width:36px;text-align:center;top:17.00px;font-size:18.43px;color:#e8e8e8;line-height:1;white-space:nowrap;">22</div></div>
<div style="left:11.00px;top:1081.30px;width:36.00px;height:1.00px;background:#4a4a4a;"></div>
<div style="left:11px;top:1044.50px;width:36px;height:37.30px;overflow:hidden;"><div style="left:0;width:36px;text-align:center;top:17.20px;font-size:18.43px;color:#e8e8e8;line-height:1;white-space:nowrap;">23</div></div>
<div style="left:11.00px;top:1118.40px;width:36.00px;height:1.00px;background:#4a4a4a;"></div>
<div style="left:11px;top:1081.80px;width:36px;height:37.10px;overflow:hidden;"><div style="left:0;width:36px;text-align:center;top:17.00px;font-size:18.43px;color:#e8e8e8;line-height:1;white-space:nowrap;">24</div></div>
<div style="left:11.00px;top:1153.70px;width:36.00px;height:1.00px;background:#4a4a4a;"></div>
<div style="left:11px;top:1118.90px;width:36px;height:35.30px;overflow:hidden;"><div style="left:0;width:36px;text-align:center;top:15.20px;font-size:18.43px;color:#e8e8e8;line-height:1;white-space:nowrap;">25</div></div>
<div style="left:11.00px;top:1194.90px;width:36.00px;height:1.00px;background:#4a4a4a;"></div>
<div style="left:11px;top:1157.80px;width:36px;height:37.60px;overflow:hidden;"><div style="left:0;width:36px;text-align:center;top:17.50px;font-size:18.43px;color:#e8e8e8;line-height:1;white-space:nowrap;">28</div></div>
<div style="left:11.00px;top:1234.50px;width:36.00px;height:1.00px;background:#4a4a4a;"></div>
<div style="left:11px;top:1200.20px;width:36px;height:34.80px;overflow:hidden;"><div style="left:0;width:36px;text-align:center;top:14.70px;font-size:18.43px;color:#e8e8e8;line-height:1;white-space:nowrap;">30</div></div>
<div style="left:11.00px;top:1269.70px;width:36.00px;height:1.00px;background:#4a4a4a;"></div>
<div style="left:11px;top:1235.00px;width:36px;height:35.20px;overflow:hidden;"><div style="left:0;width:36px;text-align:center;top:15.10px;font-size:18.43px;color:#e8e8e8;line-height:1;white-space:nowrap;">31</div></div>
<div style="left:11.00px;top:1305.80px;width:36.00px;height:1.00px;background:#4a4a4a;"></div>
<div style="left:11px;top:1270.20px;width:36px;height:36.10px;overflow:hidden;"><div style="left:0;width:36px;text-align:center;top:16.00px;font-size:18.43px;color:#e8e8e8;line-height:1;white-space:nowrap;">32</div></div>
<div style="left:11.00px;top:1340.30px;width:36.00px;height:1.00px;background:#4a4a4a;"></div>
<div style="left:11px;top:1306.30px;width:36px;height:34.50px;overflow:hidden;"><div style="left:0;width:36px;text-align:center;top:14.40px;font-size:18.43px;color:#e8e8e8;line-height:1;white-space:nowrap;">33</div></div>
<div style="left:11.00px;top:1376.90px;width:36.00px;height:1.00px;background:#4a4a4a;"></div>
<div style="left:11px;top:1340.80px;width:36px;height:36.60px;overflow:hidden;"><div style="left:0;width:36px;text-align:center;top:16.50px;font-size:18.43px;color:#e8e8e8;line-height:1;white-space:nowrap;">34</div></div>
<div style="left:11.00px;top:1407.00px;width:36.00px;height:1.00px;background:#4a4a4a;"></div>
<div style="left:11px;top:1377.40px;width:36px;height:30.10px;overflow:hidden;"><div style="left:0;width:36px;text-align:center;top:10.00px;font-size:18.43px;color:#e8e8e8;line-height:1;white-space:nowrap;">35</div></div>
<div style="left:11.00px;top:1442.60px;width:36.00px;height:1.00px;background:#4a4a4a;"></div>
<div style="left:11px;top:1407.50px;width:36px;height:35.60px;overflow:hidden;"><div style="left:0;width:36px;text-align:center;top:15.50px;font-size:18.43px;color:#e8e8e8;line-height:1;white-space:nowrap;">36</div></div>
<div style="left:11.00px;top:1483.50px;width:36.00px;height:1.00px;background:#4a4a4a;"></div>
<div style="left:11px;top:1448.00px;width:36px;height:36.00px;overflow:hidden;"><div style="left:0;width:36px;text-align:center;top:15.90px;font-size:18.43px;color:#e8e8e8;line-height:1;white-space:nowrap;">38</div></div>
<div style="left:11.00px;top:1523.20px;width:36.00px;height:1.00px;background:#4a4a4a;"></div>
<div style="left:11px;top:1488.30px;width:36px;height:35.40px;overflow:hidden;"><div style="left:0;width:36px;text-align:center;top:15.30px;font-size:18.43px;color:#e8e8e8;line-height:1;white-space:nowrap;">40</div></div>
<div style="left:11.00px;top:1558.60px;width:36.00px;height:1.00px;background:#4a4a4a;"></div>
<div style="left:11px;top:1523.70px;width:36px;height:35.40px;overflow:hidden;"><div style="left:0;width:36px;text-align:center;top:15.30px;font-size:18.43px;color:#e8e8e8;line-height:1;white-space:nowrap;">41</div></div>
<div style="left:11.00px;top:1594.70px;width:36.00px;height:1.00px;background:#4a4a4a;"></div>
<div style="left:11px;top:1559.10px;width:36px;height:36.10px;overflow:hidden;"><div style="left:0;width:36px;text-align:center;top:16.00px;font-size:18.43px;color:#e8e8e8;line-height:1;white-space:nowrap;">42</div></div>
<div style="left:11.00px;top:1623.60px;width:36.00px;height:1.00px;background:#4a4a4a;"></div>
<div style="left:11px;top:1595.20px;width:36px;height:28.90px;overflow:hidden;"><div style="left:0;width:36px;text-align:center;top:8.80px;font-size:18.43px;color:#e8e8e8;line-height:1;white-space:nowrap;">43</div></div>
<div style="left:11.00px;top:1648.80px;width:36.00px;height:1.00px;background:#4a4a4a;"></div>
<div style="left:11px;top:1624.10px;width:36px;height:25.20px;overflow:hidden;"><div style="left:0;width:36px;text-align:center;top:5.10px;font-size:18.43px;color:#e8e8e8;line-height:1;white-space:nowrap;">44</div></div>
<div style="left:11px;top:1649.30px;width:36px;height:20.70px;overflow:hidden;"><div style="left:0;width:36px;text-align:center;top:3.60px;font-size:18.43px;color:#e8e8e8;line-height:1;white-space:nowrap;">45</div></div>
<div style="left:11.00px;top:1157.00px;width:36.00px;height:1.00px;background:#4a4a4a;"></div>
<div style="left:11.00px;top:1199.40px;width:36.00px;height:1.00px;background:#4a4a4a;"></div>
<div style="left:11.00px;top:1447.20px;width:36.00px;height:1.00px;background:#4a4a4a;"></div>
<div style="left:11.00px;top:1487.50px;width:36.00px;height:1.00px;background:#4a4a4a;"></div>
<div style="left:11.00px;top:300.80px;width:36.00px;height:1.20px;background:#d0d0d0;"></div>
<div style="left:11.00px;top:338.20px;width:36.00px;height:1.20px;background:#d0d0d0;"></div>
<div style="left:46.00px;top:301.30px;width:2.00px;height:37.70px;background:#1e7e45;"></div>
<div style="left:46.30px;top:301.30px;width:1.00px;height:1368.70px;background:#8a8a8a;"></div>
<div style="left:47.00px;top:300.60px;width:2814.00px;height:1.00px;background:#9a9a9a;"></div>
<div style="left:47.00px;top:433.00px;width:2814.00px;height:1.00px;background:#9a9a9a;"></div>
<div style="left:79.13px;top:304.25px;font-family:'Liberation Sans';font-size:34.43px;color:#212121;font-weight:700;line-height:1;white-space:nowrap;transform:scaleX(1.0508);transform-origin:0 0;-webkit-text-stroke:0.4px #212121;">Returns on Invested Capital</div>
<div style="left:76.49px;top:341.92px;font-family:'Liberation Sans';font-size:29.86px;color:#000;font-weight:700;line-height:1;white-space:nowrap;transform:scaleX(1.0106);transform-origin:0 0;-webkit-text-stroke:0.4px #000;">ABC Company Inc.</div>
<div style="left:75.58px;top:381.99px;font-family:'Liberation Sans';font-size:19.14px;color:#2f73ea;font-weight:700;line-height:1;white-space:nowrap;transform:scaleX(1.0609);transform-origin:0 0;-webkit-text-stroke:0.4px #2f73ea;">Go to Table of Contents</div>
<div style="left:76.00px;top:398.90px;width:227.00px;height:2.00px;background:#2c64cc;"></div>
<div style="left:72.50px;top:433.90px;width:480.00px;height:30.10px;background:#4a4fd2;"></div>
<div style="left:72.50px;top:471.00px;width:480.00px;height:31.00px;background:#4bb3e6;"></div>
<div style="left:217.05px;top:438.56px;font-family:'Liberation Sans';font-size:23.43px;color:#fff;font-weight:700;line-height:1;white-space:nowrap;transform:scaleX(1.0791);transform-origin:50% 0;-webkit-text-stroke:0.4px #fff;">Years to payback</div>
<div style="left:297.31px;top:475.91px;font-family:'Liberation Sans';font-size:22.43px;color:#fff;font-weight:700;line-height:1;white-space:nowrap;transform:scaleX(1.3000);transform-origin:50% 0;-webkit-text-stroke:0.4px #fff;">0.8</div>
<div style="left:708.00px;top:433.90px;width:469.40px;height:30.10px;background:#4a4fd2;"></div>
<div style="left:708.00px;top:471.00px;width:469.40px;height:31.00px;background:#4bb3e6;"></div>
<div style="left:770.48px;top:438.56px;font-family:'Liberation Sans';font-size:23.43px;color:#fff;font-weight:700;line-height:1;white-space:nowrap;transform:scaleX(1.1073);transform-origin:50% 0;-webkit-text-stroke:0.4px #fff;">5-Year Cash Generated ($'000)</div>
<div style="left:908.94px;top:475.91px;font-family:'Liberation Sans';font-size:22.43px;color:#fff;font-weight:700;line-height:1;white-space:nowrap;transform:scaleX(1.2539);transform-origin:50% 0;-webkit-text-stroke:0.4px #fff;">6,875</div>
<div style="left:1332.40px;top:433.90px;width:468.60px;height:30.10px;background:#4a4fd2;"></div>
<div style="left:1332.40px;top:471.00px;width:468.60px;height:31.00px;background:#4bb3e6;"></div>
<div style="left:1500.71px;top:438.56px;font-family:'Liberation Sans';font-size:23.43px;color:#fff;font-weight:700;line-height:1;white-space:nowrap;transform:scaleX(1.1432);transform-origin:50% 0;-webkit-text-stroke:0.4px #fff;">ROIC - 2030</div>
<div style="left:1534.91px;top:475.91px;font-family:'Liberation Sans';font-size:22.43px;color:#fff;font-weight:700;line-height:1;white-space:nowrap;transform:scaleX(1.3000);transform-origin:50% 0;-webkit-text-stroke:0.4px #fff;">52.0%</div>
<div style="left:72.50px;top:527.30px;width:1728.00px;height:36.10px;background:#4a4fd2;"></div>
<div style="left:662.68px;top:533.66px;font-family:'Liberation Sans';font-size:27.57px;color:#fff;font-weight:700;line-height:1;white-space:nowrap;transform:scaleX(1.1445);transform-origin:50% 0;-webkit-text-stroke:0.4px #fff;">Returns on Invested Capital Chart ($'000)</div>
<svg style="position:absolute;left:0.00px;top:0.00px;overflow:visible;" width="2902" height="1762" viewBox="0 0 2902 1762"><line x1="211.6" y1="977.73" x2="1800.0" y2="977.73" stroke="#6b9fbb" stroke-width="1.15"/><line x1="211.6" y1="938.56" x2="1800.0" y2="938.56" stroke="#6b9fbb" stroke-width="1.15"/><line x1="211.6" y1="899.39" x2="1800.0" y2="899.39" stroke="#6b9fbb" stroke-width="1.15"/><line x1="211.6" y1="860.22" x2="1800.0" y2="860.22" stroke="#6b9fbb" stroke-width="1.15"/><line x1="211.6" y1="821.05" x2="1800.0" y2="821.05" stroke="#6b9fbb" stroke-width="1.15"/><line x1="211.6" y1="781.88" x2="1800.0" y2="781.88" stroke="#6b9fbb" stroke-width="1.15"/><line x1="211.6" y1="742.71" x2="1800.0" y2="742.71" stroke="#6b9fbb" stroke-width="1.15"/><line x1="211.6" y1="703.54" x2="1800.0" y2="703.54" stroke="#6b9fbb" stroke-width="1.15"/><line x1="211.6" y1="664.37" x2="1800.0" y2="664.37" stroke="#6b9fbb" stroke-width="1.15"/><rect x="248.64" y="973.59" width="121.8" height="43.01" fill="#4bb3e6"/><rect x="370.44" y="1011.55" width="121.8" height="5.05" fill="#f07a6e"/><rect x="566.32" y="956.20" width="121.8" height="60.40" fill="#4bb3e6"/><rect x="688.12" y="996.90" width="121.8" height="19.70" fill="#f07a6e"/><rect x="884.00" y="914.25" width="121.8" height="102.35" fill="#4bb3e6"/><rect x="1005.80" y="972.38" width="121.8" height="44.22" fill="#f07a6e"/><rect x="1201.68" y="838.38" width="121.8" height="178.22" fill="#4bb3e6"/><rect x="1323.48" y="938.50" width="121.8" height="78.10" fill="#f07a6e"/><rect x="1519.36" y="716.24" width="121.8" height="300.36" fill="#4bb3e6"/><rect x="1641.16" y="892.27" width="121.8" height="124.33" fill="#f07a6e"/><line x1="211.6" y1="1016.9" x2="1800.0" y2="1016.9" stroke="#4aa3d3" stroke-width="2.1"/><line x1="212.20" y1="1016.6" x2="212.20" y2="1023.6" stroke="#4a8fc0" stroke-width="1.9"/><line x1="529.88" y1="1016.6" x2="529.88" y2="1023.6" stroke="#4a8fc0" stroke-width="1.9"/><line x1="847.56" y1="1016.6" x2="847.56" y2="1023.6" stroke="#4a8fc0" stroke-width="1.9"/><line x1="1165.24" y1="1016.6" x2="1165.24" y2="1023.6" stroke="#4a8fc0" stroke-width="1.9"/><line x1="1482.92" y1="1016.6" x2="1482.92" y2="1023.6" stroke="#4a8fc0" stroke-width="1.9"/><line x1="1800.60" y1="1016.6" x2="1800.60" y2="1023.6" stroke="#4a8fc0" stroke-width="1.9"/><polyline points="370.44,947.81 688.12,792.12 1005.80,696.59 1323.48,688.34 1641.16,710.16" fill="none" stroke="#2eb5a6" stroke-width="5" stroke-linejoin="round"/><circle cx="370.44" cy="947.81" r="39.3" fill="#2eb5a6"/><circle cx="688.12" cy="792.12" r="39.3" fill="#2eb5a6"/><circle cx="1005.80" cy="696.59" r="39.3" fill="#2eb5a6"/><circle cx="1323.48" cy="688.34" r="39.3" fill="#2eb5a6"/><circle cx="1641.16" cy="710.16" r="39.3" fill="#2eb5a6"/></svg>
<div style="left:342.24px;top:938.63px;font-family:'Liberation Sans';font-size:20.29px;color:#fff;font-weight:700;line-height:1;white-space:nowrap;transform:scaleX(1.1491);transform-origin:50% 0;-webkit-text-stroke:0.4px #fff;">11.7%</div>
<div style="left:659.36px;top:782.94px;font-family:'Liberation Sans';font-size:20.29px;color:#fff;font-weight:700;line-height:1;white-space:nowrap;transform:scaleX(1.1256);transform-origin:50% 0;-webkit-text-stroke:0.4px #fff;">38.1%</div>
<div style="left:977.04px;top:687.41px;font-family:'Liberation Sans';font-size:20.29px;color:#fff;font-weight:700;line-height:1;white-space:nowrap;transform:scaleX(1.1256);transform-origin:50% 0;-webkit-text-stroke:0.4px #fff;">54.3%</div>
<div style="left:1294.72px;top:679.16px;font-family:'Liberation Sans';font-size:20.29px;color:#fff;font-weight:700;line-height:1;white-space:nowrap;transform:scaleX(1.1256);transform-origin:50% 0;-webkit-text-stroke:0.4px #fff;">55.7%</div>
<div style="left:1612.40px;top:700.98px;font-family:'Liberation Sans';font-size:20.29px;color:#fff;font-weight:700;line-height:1;white-space:nowrap;transform:scaleX(1.1256);transform-origin:50% 0;-webkit-text-stroke:0.4px #fff;">52.0%</div>
<div style="left:181.45px;top:1006.76px;font-family:'Liberation Sans';font-size:21.43px;color:#000;font-weight:700;line-height:1;white-space:nowrap;transform-origin:100% 0;-webkit-text-stroke:0.4px #000;">-</div>
<div style="left:135.08px;top:967.59px;font-family:'Liberation Sans';font-size:21.43px;color:#000;font-weight:700;line-height:1;white-space:nowrap;transform:scaleX(1.0776);transform-origin:100% 0;-webkit-text-stroke:0.4px #000;">1,000</div>
<div style="left:135.08px;top:928.42px;font-family:'Liberation Sans';font-size:21.43px;color:#000;font-weight:700;line-height:1;white-space:nowrap;transform:scaleX(1.0776);transform-origin:100% 0;-webkit-text-stroke:0.4px #000;">2,000</div>
<div style="left:135.08px;top:889.25px;font-family:'Liberation Sans';font-size:21.43px;color:#000;font-weight:700;line-height:1;white-space:nowrap;transform:scaleX(1.0776);transform-origin:100% 0;-webkit-text-stroke:0.4px #000;">3,000</div>
<div style="left:135.08px;top:850.08px;font-family:'Liberation Sans';font-size:21.43px;color:#000;font-weight:700;line-height:1;white-space:nowrap;transform:scaleX(1.0776);transform-origin:100% 0;-webkit-text-stroke:0.4px #000;">4,000</div>
<div style="left:135.08px;top:810.91px;font-family:'Liberation Sans';font-size:21.43px;color:#000;font-weight:700;line-height:1;white-space:nowrap;transform:scaleX(1.0776);transform-origin:100% 0;-webkit-text-stroke:0.4px #000;">5,000</div>
<div style="left:135.08px;top:771.74px;font-family:'Liberation Sans';font-size:21.43px;color:#000;font-weight:700;line-height:1;white-space:nowrap;transform:scaleX(1.0776);transform-origin:100% 0;-webkit-text-stroke:0.4px #000;">6,000</div>
<div style="left:135.08px;top:732.57px;font-family:'Liberation Sans';font-size:21.43px;color:#000;font-weight:700;line-height:1;white-space:nowrap;transform:scaleX(1.0776);transform-origin:100% 0;-webkit-text-stroke:0.4px #000;">7,000</div>
<div style="left:135.08px;top:693.40px;font-family:'Liberation Sans';font-size:21.43px;color:#000;font-weight:700;line-height:1;white-space:nowrap;transform:scaleX(1.0776);transform-origin:100% 0;-webkit-text-stroke:0.4px #000;">8,000</div>
<div style="left:135.08px;top:654.23px;font-family:'Liberation Sans';font-size:21.43px;color:#000;font-weight:700;line-height:1;white-space:nowrap;transform:scaleX(1.0776);transform-origin:100% 0;-webkit-text-stroke:0.4px #000;">9,000</div>
<div style="left:345.01px;top:1070.44px;font-family:'Liberation Sans';font-size:22.86px;color:#000;font-weight:700;line-height:1;white-space:nowrap;transform:scaleX(1.0807);transform-origin:50% 0;-webkit-text-stroke:0.4px #000;">2026</div>
<div style="left:662.69px;top:1070.44px;font-family:'Liberation Sans';font-size:22.86px;color:#000;font-weight:700;line-height:1;white-space:nowrap;transform:scaleX(1.0807);transform-origin:50% 0;-webkit-text-stroke:0.4px #000;">2027</div>
<div style="left:980.37px;top:1070.44px;font-family:'Liberation Sans';font-size:22.86px;color:#000;font-weight:700;line-height:1;white-space:nowrap;transform:scaleX(1.0807);transform-origin:50% 0;-webkit-text-stroke:0.4px #000;">2028</div>
<div style="left:1298.05px;top:1070.44px;font-family:'Liberation Sans';font-size:22.86px;color:#000;font-weight:700;line-height:1;white-space:nowrap;transform:scaleX(1.0807);transform-origin:50% 0;-webkit-text-stroke:0.4px #000;">2029</div>
<div style="left:1615.73px;top:1070.44px;font-family:'Liberation Sans';font-size:22.86px;color:#000;font-weight:700;line-height:1;white-space:nowrap;transform:scaleX(1.0807);transform-origin:50% 0;-webkit-text-stroke:0.4px #000;">2030</div>
<div style="left:277.90px;top:595.60px;width:46.10px;height:13.10px;background:#4bb3e6;"></div>
<div style="left:328.04px;top:590.28px;font-family:'Liberation Sans';font-size:24.0px;color:#000;font-weight:700;line-height:1;white-space:nowrap;transform:scaleX(1.0846);transform-origin:0 0;-webkit-text-stroke:0.4px #000;">Total Invested Capital</div>
<div style="left:774.80px;top:595.60px;width:46.20px;height:13.10px;background:#f07a6e;"></div>
<div style="left:825.44px;top:590.28px;font-family:'Liberation Sans';font-size:24.0px;color:#000;font-weight:700;line-height:1;white-space:nowrap;transform:scaleX(1.0843);transform-origin:0 0;-webkit-text-stroke:0.4px #000;">Net Operating Profit After Tax (NOPAT)</div>
<svg style="position:absolute;left:1479.00px;top:589.10px;overflow:visible;" width="50" height="24" viewBox="0 0 50 24"><line x1="1.8" y1="12" x2="47.5" y2="12" stroke="#2eb5a6" stroke-width="3.6" stroke-linecap="round"/><circle cx="23.3" cy="12" r="6.7" fill="#2eb5a6"/></svg>
<div style="left:1531.13px;top:590.28px;font-family:'Liberation Sans';font-size:24.0px;color:#000;font-weight:700;line-height:1;white-space:nowrap;transform:scaleX(1.0907);transform-origin:0 0;-webkit-text-stroke:0.4px #000;">ROIC</div>
<div style="left:72.50px;top:1118.30px;width:1728.00px;height:36.60px;background:#4a4fd2;"></div>
<div style="left:680.80px;top:1123.35px;font-family:'Liberation Sans';font-size:30.29px;color:#fff;font-weight:700;line-height:1;white-space:nowrap;transform:scaleX(1.0461);transform-origin:50% 0;-webkit-text-stroke:0.4px #fff;">Returns on Invested Capital ($'000)</div>
<div style="left:73.20px;top:1159.90px;width:1727.30px;height:35.30px;background:#6c73e6;"></div>
<div style="left:1019.90px;top:1159.90px;width:1.60px;height:35.30px;background:#fff;"></div>
<div style="left:1175.80px;top:1159.90px;width:1.60px;height:35.30px;background:#fff;"></div>
<div style="left:1331.90px;top:1159.90px;width:1.60px;height:35.30px;background:#fff;"></div>
<div style="left:1488.00px;top:1159.90px;width:1.60px;height:35.30px;background:#fff;"></div>
<div style="left:1644.10px;top:1159.90px;width:1.60px;height:35.30px;background:#fff;"></div>
<div style="left:84.90px;top:1168.78px;font-family:'Liberation Sans';font-size:19.86px;color:#fff;font-weight:700;line-height:1;white-space:nowrap;transform:scaleX(1.0094);transform-origin:0 0;-webkit-text-stroke:0.4px #fff;">Fiscal Year</div>
<div style="left:1076.26px;top:1168.78px;font-family:'Liberation Sans';font-size:19.86px;color:#fff;font-weight:700;line-height:1;white-space:nowrap;transform:scaleX(1.1195);transform-origin:50% 0;-webkit-text-stroke:0.4px #fff;">2026</div>
<div style="left:1232.26px;top:1168.78px;font-family:'Liberation Sans';font-size:19.86px;color:#fff;font-weight:700;line-height:1;white-space:nowrap;transform:scaleX(1.1195);transform-origin:50% 0;-webkit-text-stroke:0.4px #fff;">2027</div>
<div style="left:1388.36px;top:1168.78px;font-family:'Liberation Sans';font-size:19.86px;color:#fff;font-weight:700;line-height:1;white-space:nowrap;transform:scaleX(1.1195);transform-origin:50% 0;-webkit-text-stroke:0.4px #fff;">2028</div>
<div style="left:1544.46px;top:1168.78px;font-family:'Liberation Sans';font-size:19.86px;color:#fff;font-weight:700;line-height:1;white-space:nowrap;transform:scaleX(1.1195);transform-origin:50% 0;-webkit-text-stroke:0.4px #fff;">2029</div>
<div style="left:1700.41px;top:1168.78px;font-family:'Liberation Sans';font-size:19.86px;color:#fff;font-weight:700;line-height:1;white-space:nowrap;transform:scaleX(1.1195);transform-origin:50% 0;-webkit-text-stroke:0.4px #fff;">2030</div>
<div style="left:72.20px;top:1270.20px;width:1728.30px;height:36.00px;background:#4bb3e6;"></div>
<div style="left:72.20px;top:1341.10px;width:1728.30px;height:36.50px;background:#4bb3e6;"></div>
<div style="left:94.28px;top:1209.39px;font-family:'Liberation Sans';font-size:19.14px;color:#111;font-weight:400;line-height:1;white-space:nowrap;transform:scaleX(0.9775);transform-origin:0 0;">Debts</div>
<div style="left:1133.23px;top:1208.78px;font-family:'Liberation Sans';font-size:19.86px;color:#111;font-weight:400;line-height:1;white-space:nowrap;transform:scaleX(0.9000);transform-origin:100% 0;">283</div>
<div style="left:1289.33px;top:1208.78px;font-family:'Liberation Sans';font-size:19.86px;color:#111;font-weight:400;line-height:1;white-space:nowrap;transform:scaleX(0.9000);transform-origin:100% 0;">237</div>
<div style="left:1445.43px;top:1208.78px;font-family:'Liberation Sans';font-size:19.86px;color:#111;font-weight:400;line-height:1;white-space:nowrap;transform:scaleX(0.9000);transform-origin:100% 0;">190</div>
<div style="left:1601.53px;top:1208.78px;font-family:'Liberation Sans';font-size:19.86px;color:#111;font-weight:400;line-height:1;white-space:nowrap;transform:scaleX(0.9000);transform-origin:100% 0;">141</div>
<div style="left:1768.38px;top:1208.78px;font-family:'Liberation Sans';font-size:19.86px;color:#111;font-weight:400;line-height:1;white-space:nowrap;transform:scaleX(0.9000);transform-origin:100% 0;">90</div>
<div style="left:94.27px;top:1244.49px;font-family:'Liberation Sans';font-size:19.14px;color:#111;font-weight:400;line-height:1;white-space:nowrap;transform:scaleX(0.9851);transform-origin:0 0;">Equity</div>
<div style="left:1133.23px;top:1243.88px;font-family:'Liberation Sans';font-size:19.86px;color:#111;font-weight:400;line-height:1;white-space:nowrap;transform:scaleX(0.9000);transform-origin:100% 0;">815</div>
<div style="left:1272.77px;top:1243.88px;font-family:'Liberation Sans';font-size:19.86px;color:#111;font-weight:400;line-height:1;white-space:nowrap;transform:scaleX(0.9000);transform-origin:100% 0;">1,305</div>
<div style="left:1428.87px;top:1243.88px;font-family:'Liberation Sans';font-size:19.86px;color:#111;font-weight:400;line-height:1;white-space:nowrap;transform:scaleX(0.9000);transform-origin:100% 0;">2,424</div>
<div style="left:1584.97px;top:1243.88px;font-family:'Liberation Sans';font-size:19.86px;color:#111;font-weight:400;line-height:1;white-space:nowrap;transform:scaleX(0.9000);transform-origin:100% 0;">4,410</div>
<div style="left:1740.77px;top:1243.88px;font-family:'Liberation Sans';font-size:19.86px;color:#111;font-weight:400;line-height:1;white-space:nowrap;transform:scaleX(0.9000);transform-origin:100% 0;">7,578</div>
<div style="left:76.07px;top:1277.76px;font-family:'Liberation Sans';font-size:23.43px;color:#fff;font-weight:700;line-height:1;white-space:nowrap;transform:scaleX(1.0188);transform-origin:0 0;-webkit-text-stroke:0.4px #fff;">Total Invested Capital</div>
<div style="left:1109.19px;top:1278.49px;font-family:'Liberation Sans';font-size:22.57px;color:#fff;font-weight:700;line-height:1;white-space:nowrap;transform-origin:100% 0;-webkit-text-stroke:0.4px #fff;">1,098</div>
<div style="left:1265.29px;top:1278.49px;font-family:'Liberation Sans';font-size:22.57px;color:#fff;font-weight:700;line-height:1;white-space:nowrap;transform-origin:100% 0;-webkit-text-stroke:0.4px #fff;">1,542</div>
<div style="left:1421.39px;top:1278.49px;font-family:'Liberation Sans';font-size:22.57px;color:#fff;font-weight:700;line-height:1;white-space:nowrap;transform-origin:100% 0;-webkit-text-stroke:0.4px #fff;">2,613</div>
<div style="left:1577.49px;top:1278.49px;font-family:'Liberation Sans';font-size:22.57px;color:#fff;font-weight:700;line-height:1;white-space:nowrap;transform-origin:100% 0;-webkit-text-stroke:0.4px #fff;">4,550</div>
<div style="left:1733.29px;top:1278.49px;font-family:'Liberation Sans';font-size:22.57px;color:#fff;font-weight:700;line-height:1;white-space:nowrap;transform-origin:100% 0;-webkit-text-stroke:0.4px #fff;">7,668</div>
<div style="left:94.26px;top:1315.19px;font-family:'Liberation Sans';font-size:19.14px;color:#111;font-weight:400;line-height:1;white-space:nowrap;transform:scaleX(0.9933);transform-origin:0 0;">Net Operating Profit After Tax (NOPAT)</div>
<div style="left:1133.23px;top:1314.58px;font-family:'Liberation Sans';font-size:19.86px;color:#111;font-weight:400;line-height:1;white-space:nowrap;transform:scaleX(0.9000);transform-origin:100% 0;">129</div>
<div style="left:1289.33px;top:1314.58px;font-family:'Liberation Sans';font-size:19.86px;color:#111;font-weight:400;line-height:1;white-space:nowrap;transform:scaleX(0.9000);transform-origin:100% 0;">503</div>
<div style="left:1428.87px;top:1314.58px;font-family:'Liberation Sans';font-size:19.86px;color:#111;font-weight:400;line-height:1;white-space:nowrap;transform:scaleX(0.9000);transform-origin:100% 0;">1,129</div>
<div style="left:1584.97px;top:1314.58px;font-family:'Liberation Sans';font-size:19.86px;color:#111;font-weight:400;line-height:1;white-space:nowrap;transform:scaleX(0.9000);transform-origin:100% 0;">1,994</div>
<div style="left:1740.77px;top:1314.58px;font-family:'Liberation Sans';font-size:19.86px;color:#111;font-weight:400;line-height:1;white-space:nowrap;transform:scaleX(0.9000);transform-origin:100% 0;">3,174</div>
<div style="left:76.03px;top:1348.56px;font-family:'Liberation Sans';font-size:23.43px;color:#fff;font-weight:700;line-height:1;white-space:nowrap;transform:scaleX(1.0475);transform-origin:0 0;-webkit-text-stroke:0.4px #fff;">ROIC</div>
<div style="left:1110.70px;top:1349.29px;font-family:'Liberation Sans';font-size:22.57px;color:#fff;font-weight:700;line-height:1;white-space:nowrap;transform:scaleX(1.0600);transform-origin:100% 0;-webkit-text-stroke:0.4px #fff;">11.7%</div>
<div style="left:1265.55px;top:1349.29px;font-family:'Liberation Sans';font-size:22.57px;color:#fff;font-weight:700;line-height:1;white-space:nowrap;transform:scaleX(1.0600);transform-origin:100% 0;-webkit-text-stroke:0.4px #fff;">38.1%</div>
<div style="left:1421.65px;top:1349.29px;font-family:'Liberation Sans';font-size:22.57px;color:#fff;font-weight:700;line-height:1;white-space:nowrap;transform:scaleX(1.0600);transform-origin:100% 0;-webkit-text-stroke:0.4px #fff;">54.3%</div>
<div style="left:1577.75px;top:1349.29px;font-family:'Liberation Sans';font-size:22.57px;color:#fff;font-weight:700;line-height:1;white-space:nowrap;transform:scaleX(1.0600);transform-origin:100% 0;-webkit-text-stroke:0.4px #fff;">55.7%</div>
<div style="left:1733.55px;top:1349.29px;font-family:'Liberation Sans';font-size:22.57px;color:#fff;font-weight:700;line-height:1;white-space:nowrap;transform:scaleX(1.0600);transform-origin:100% 0;-webkit-text-stroke:0.4px #fff;">52.0%</div>
<div style="left:72.50px;top:1406.60px;width:1728.00px;height:37.20px;background:#4a4fd2;"></div>
<div style="left:702.33px;top:1411.65px;font-family:'Liberation Sans';font-size:30.29px;color:#fff;font-weight:700;line-height:1;white-space:nowrap;transform:scaleX(1.0286);transform-origin:50% 0;-webkit-text-stroke:0.4px #fff;">Payback Period Analysis ($'000)</div>
<div style="left:73.20px;top:1449.30px;width:1727.30px;height:34.30px;background:#6c73e6;"></div>
<div style="left:1019.90px;top:1449.30px;width:1.60px;height:34.30px;background:#fff;"></div>
<div style="left:1175.80px;top:1449.30px;width:1.60px;height:34.30px;background:#fff;"></div>
<div style="left:1331.90px;top:1449.30px;width:1.60px;height:34.30px;background:#fff;"></div>
<div style="left:1488.00px;top:1449.30px;width:1.60px;height:34.30px;background:#fff;"></div>
<div style="left:1644.10px;top:1449.30px;width:1.60px;height:34.30px;background:#fff;"></div>
<div style="left:84.90px;top:1457.98px;font-family:'Liberation Sans';font-size:19.86px;color:#fff;font-weight:700;line-height:1;white-space:nowrap;transform:scaleX(1.0094);transform-origin:0 0;-webkit-text-stroke:0.4px #fff;">Fiscal Year</div>
<div style="left:1076.26px;top:1457.98px;font-family:'Liberation Sans';font-size:19.86px;color:#fff;font-weight:700;line-height:1;white-space:nowrap;transform:scaleX(1.1195);transform-origin:50% 0;-webkit-text-stroke:0.4px #fff;">2026</div>
<div style="left:1232.26px;top:1457.98px;font-family:'Liberation Sans';font-size:19.86px;color:#fff;font-weight:700;line-height:1;white-space:nowrap;transform:scaleX(1.1195);transform-origin:50% 0;-webkit-text-stroke:0.4px #fff;">2027</div>
<div style="left:1388.36px;top:1457.98px;font-family:'Liberation Sans';font-size:19.86px;color:#fff;font-weight:700;line-height:1;white-space:nowrap;transform:scaleX(1.1195);transform-origin:50% 0;-webkit-text-stroke:0.4px #fff;">2028</div>
<div style="left:1544.46px;top:1457.98px;font-family:'Liberation Sans';font-size:19.86px;color:#fff;font-weight:700;line-height:1;white-space:nowrap;transform:scaleX(1.1195);transform-origin:50% 0;-webkit-text-stroke:0.4px #fff;">2029</div>
<div style="left:1700.41px;top:1457.98px;font-family:'Liberation Sans';font-size:19.86px;color:#fff;font-weight:700;line-height:1;white-space:nowrap;transform:scaleX(1.1195);transform-origin:50% 0;-webkit-text-stroke:0.4px #fff;">2030</div>
<div style="left:72.20px;top:1559.60px;width:1728.30px;height:35.10px;background:#4bb3e6;"></div>
<div style="left:94.24px;top:1498.49px;font-family:'Liberation Sans';font-size:19.14px;color:#111;font-weight:400;line-height:1;white-space:nowrap;transform:scaleX(1.0141);transform-origin:0 0;">Net Profit After Tax</div>
<div style="left:1133.23px;top:1497.88px;font-family:'Liberation Sans';font-size:19.86px;color:#111;font-weight:400;line-height:1;white-space:nowrap;transform:scaleX(0.9000);transform-origin:100% 0;">129</div>
<div style="left:1289.33px;top:1497.88px;font-family:'Liberation Sans';font-size:19.86px;color:#111;font-weight:400;line-height:1;white-space:nowrap;transform:scaleX(0.9000);transform-origin:100% 0;">503</div>
<div style="left:1428.87px;top:1497.88px;font-family:'Liberation Sans';font-size:19.86px;color:#111;font-weight:400;line-height:1;white-space:nowrap;transform:scaleX(0.9000);transform-origin:100% 0;">1,129</div>
<div style="left:1584.97px;top:1497.88px;font-family:'Liberation Sans';font-size:19.86px;color:#111;font-weight:400;line-height:1;white-space:nowrap;transform:scaleX(0.9000);transform-origin:100% 0;">1,994</div>
<div style="left:1740.77px;top:1497.88px;font-family:'Liberation Sans';font-size:19.86px;color:#111;font-weight:400;line-height:1;white-space:nowrap;transform:scaleX(0.9000);transform-origin:100% 0;">3,174</div>
<div style="left:94.42px;top:1533.39px;font-family:'Liberation Sans';font-size:19.14px;color:#111;font-weight:400;line-height:1;white-space:nowrap;transform:scaleX(0.8506);transform-origin:0 0;">CAPEX</div>
<div style="left:1137.44px;top:1532.78px;font-family:'Liberation Sans';font-size:19.86px;color:#111;font-weight:400;line-height:1;white-space:nowrap;transform:scaleX(0.9000);transform-origin:100% 0;">(54)</div>
<div style="left:1315.85px;top:1532.78px;font-family:'Liberation Sans';font-size:19.86px;color:#111;font-weight:400;line-height:1;white-space:nowrap;transform:scaleX(0.9000);transform-origin:100% 0;">-</div>
<div style="left:1471.95px;top:1532.78px;font-family:'Liberation Sans';font-size:19.86px;color:#111;font-weight:400;line-height:1;white-space:nowrap;transform:scaleX(0.9000);transform-origin:100% 0;">-</div>
<div style="left:1628.05px;top:1532.78px;font-family:'Liberation Sans';font-size:19.86px;color:#111;font-weight:400;line-height:1;white-space:nowrap;transform:scaleX(0.9000);transform-origin:100% 0;">-</div>
<div style="left:1783.85px;top:1532.78px;font-family:'Liberation Sans';font-size:19.86px;color:#111;font-weight:400;line-height:1;white-space:nowrap;transform:scaleX(0.9000);transform-origin:100% 0;">-</div>
<div style="left:76.09px;top:1565.96px;font-family:'Liberation Sans';font-size:23.43px;color:#fff;font-weight:700;line-height:1;white-space:nowrap;transform-origin:0 0;-webkit-text-stroke:0.4px #fff;">Cumulative Cash Generated (Spent)</div>
<div style="left:1140.54px;top:1566.69px;font-family:'Liberation Sans';font-size:22.57px;color:#fff;font-weight:700;line-height:1;white-space:nowrap;transform-origin:100% 0;-webkit-text-stroke:0.4px #fff;">75</div>
<div style="left:1284.10px;top:1566.69px;font-family:'Liberation Sans';font-size:22.57px;color:#fff;font-weight:700;line-height:1;white-space:nowrap;transform-origin:100% 0;-webkit-text-stroke:0.4px #fff;">578</div>
<div style="left:1421.39px;top:1566.69px;font-family:'Liberation Sans';font-size:22.57px;color:#fff;font-weight:700;line-height:1;white-space:nowrap;transform-origin:100% 0;-webkit-text-stroke:0.4px #fff;">1,707</div>
<div style="left:1577.49px;top:1566.69px;font-family:'Liberation Sans';font-size:22.57px;color:#fff;font-weight:700;line-height:1;white-space:nowrap;transform-origin:100% 0;-webkit-text-stroke:0.4px #fff;">3,701</div>
<div style="left:1733.29px;top:1566.69px;font-family:'Liberation Sans';font-size:22.57px;color:#fff;font-weight:700;line-height:1;white-space:nowrap;transform-origin:100% 0;-webkit-text-stroke:0.4px #fff;">6,875</div>
<div style="left:75.21px;top:1600.58px;font-family:'Liberation Sans';font-size:19.86px;color:#111;font-weight:700;line-height:1;white-space:nowrap;transform-origin:0 0;-webkit-text-stroke:0.4px #111;">Payback year</div>
<div style="left:1020.30px;top:1596.00px;width:156.30px;height:28.60px;background:#2db5a5;"></div>
<div style="left:1092.78px;top:1600.58px;font-family:'Liberation Sans';font-size:19.86px;color:#111;font-weight:700;line-height:1;white-space:nowrap;transform-origin:50% 0;-webkit-text-stroke:0.4px #111;">1</div>
<div style="left:1251.04px;top:1600.58px;font-family:'Liberation Sans';font-size:19.86px;color:#111;font-weight:700;line-height:1;white-space:nowrap;transform-origin:50% 0;-webkit-text-stroke:0.4px #111;">-</div>
<div style="left:1407.14px;top:1600.58px;font-family:'Liberation Sans';font-size:19.86px;color:#111;font-weight:700;line-height:1;white-space:nowrap;transform-origin:50% 0;-webkit-text-stroke:0.4px #111;">-</div>
<div style="left:1563.24px;top:1600.58px;font-family:'Liberation Sans';font-size:19.86px;color:#111;font-weight:700;line-height:1;white-space:nowrap;transform-origin:50% 0;-webkit-text-stroke:0.4px #111;">-</div>
<div style="left:1719.19px;top:1600.58px;font-family:'Liberation Sans';font-size:19.86px;color:#111;font-weight:700;line-height:1;white-space:nowrap;transform-origin:50% 0;-webkit-text-stroke:0.4px #111;">-</div>
</body></html>
